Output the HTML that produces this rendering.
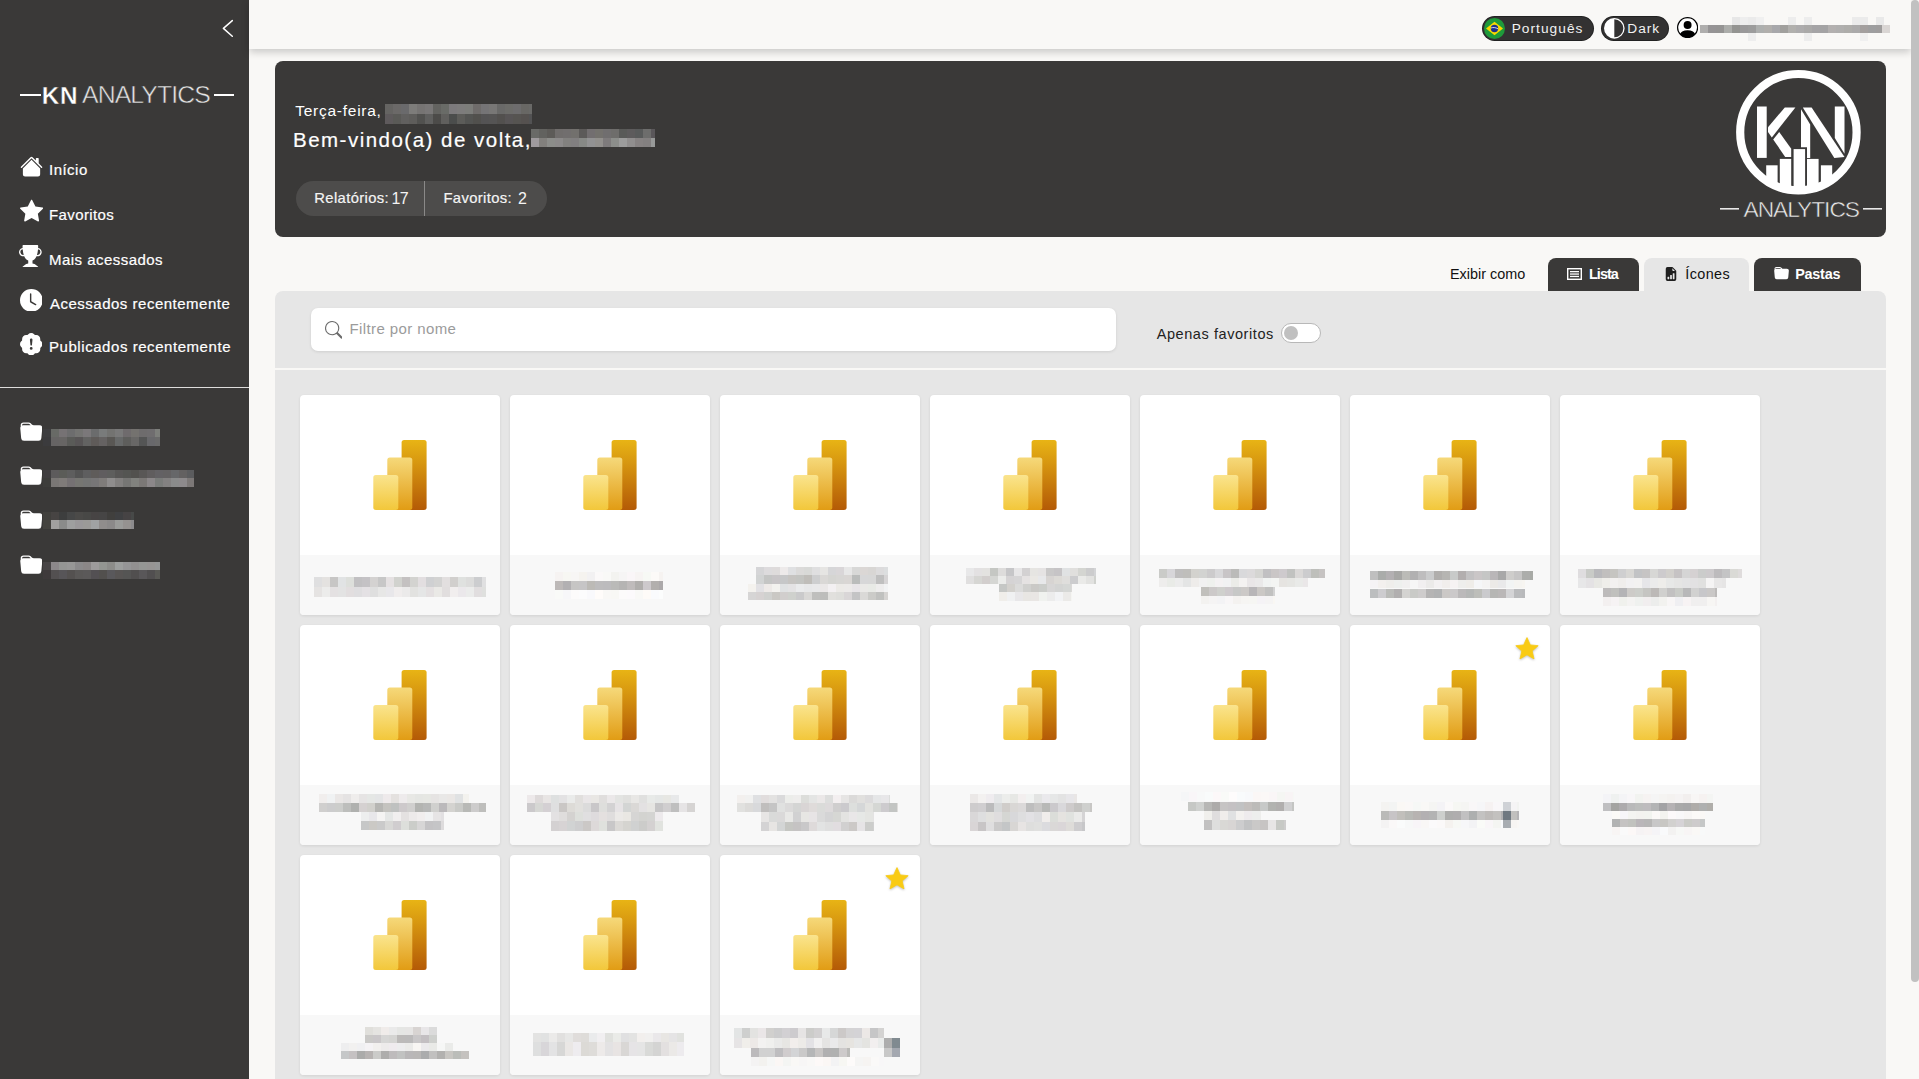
<!DOCTYPE html>
<html><head><meta charset="utf-8">
<style>
html,body{margin:0;padding:0}
body{width:1919px;height:1079px;overflow:hidden;position:relative;background:#f9f8f6;font-family:"Liberation Sans",sans-serif;}
i{position:absolute;display:block}
.abs{position:absolute}
#side{position:absolute;left:0;top:0;width:249px;height:1079px;background:#3a3938}
#top{position:absolute;left:249px;top:0;width:1662px;height:49px;background:#f9f8f6;box-shadow:0 3px 8px rgba(0,0,0,.2)}
#sb{position:absolute;left:1911px;top:0;width:8px;height:982px;background:#c1c1c1;border-radius:4px}
.t{position:absolute;white-space:nowrap;line-height:1}
.nav{color:#fff;font-size:14.5px}
#hero{position:absolute;left:275px;top:61px;width:1611px;height:176px;background:#3a3938;border-radius:8px}
#pill{position:absolute;left:296px;top:181px;width:251px;height:35px;background:#4d4c4b;border-radius:18px}
#panel{position:absolute;left:275px;top:291px;width:1611px;height:800px;background:#e6e6e6;border-radius:8px 8px 0 0}
#divl{position:absolute;left:275px;top:368px;width:1611px;height:2px;background:#f9f8f6}
.tab{position:absolute;top:258px;height:33px;border-radius:8px 8px 0 0;background:#3a3938}
#search{position:absolute;left:311px;top:308px;width:805px;height:43px;background:#fff;border-radius:7px;box-shadow:0 1px 3px rgba(0,0,0,.10)}
.card{position:absolute;width:200px;height:220px;background:#fff;border-radius:4px;overflow:hidden;box-shadow:0 1px 3px rgba(0,0,0,.09)}
.card .foot{position:absolute;left:0;top:160px;width:200px;height:60px;background:#f8f8f8}
.pbi{position:absolute}
.fstar{position:absolute}
.pillbtn{position:absolute;top:17px;height:23px;background:#333232;border-radius:13px;box-shadow:0 0 0 1px #222}
</style></head><body>
<svg width="0" height="0" style="position:absolute">
<defs>
<linearGradient id="g1" x1="0" y1="0" x2="0" y2="1"><stop offset="0" stop-color="#e8b415"/><stop offset="1" stop-color="#b45a06"/></linearGradient>
<linearGradient id="g2" x1="0" y1="0" x2="0" y2="1"><stop offset="0" stop-color="#f6d97a"/><stop offset="1" stop-color="#e19c14"/></linearGradient>
<linearGradient id="g3" x1="0" y1="0" x2="0" y2="1"><stop offset="0" stop-color="#fae48e"/><stop offset="1" stop-color="#f2c73a"/></linearGradient>
<symbol id="pbi" viewBox="0 0 54 70">
<rect x="28.6" y="0" width="25" height="70" rx="2.5" fill="url(#g1)"/>
<rect x="14.3" y="17.5" width="25" height="52.5" rx="2.5" fill="url(#g2)"/>
<rect x="0.3" y="35" width="25" height="35" rx="2.5" fill="url(#g3)"/>
</symbol>
</defs>
</svg>

<div id="side">
  <!-- chevron -->
  <svg class="abs" style="left:215px;top:14px" width="25" height="28" viewBox="215 14 25 28"><path d="M232.3 20.6L223.4 28.4l8.9 7.9" fill="none" stroke="#fff" stroke-width="1.5" stroke-linecap="round" stroke-linejoin="round"/></svg>
  <!-- logo -->
  <i style="left:20px;top:94px;width:21px;height:2px;background:#fff"></i>
  <div class="t" style="left:41.8px;top:83.60px;font-size:24.3px;color:#fff;letter-spacing:0.7px;font-weight:bold;-webkit-text-stroke:0.4px #3a3938">KN</div>
  <div class="t" style="left:82.0px;top:83.30px;font-size:24.8px;color:#e4e4e4;letter-spacing:-0.9px;-webkit-text-stroke:0.5px #3a3938">ANALYTICS</div>
  <i style="left:214px;top:94px;width:20px;height:2px;background:#fff"></i>

  <!-- nav icons -->
  <svg class="abs" style="left:19.7px;top:155.3px" width="23.04" height="23.04" viewBox="0 0 16 16" fill="#fff"><path d="M8.707 1.5a1 1 0 0 0-1.414 0L.646 8.146a.5.5 0 0 0 .708.708L8 2.207l6.646 6.647a.5.5 0 0 0 .708-.708L13 5.793V2.5a.5.5 0 0 0-.5-.5h-1a.5.5 0 0 0-.5.5v1.293z"/><path d="m8 3.293 6 6V13.5a1.5 1.5 0 0 1-1.5 1.5h-9A1.5 1.5 0 0 1 2 13.5V9.293z"/></svg>
  <div class="t" style="left:49.0px;top:162.40px;font-size:15px;color:#fff;letter-spacing:0.48px;-webkit-text-stroke:0.2px currentColor">Início</div>
  <svg class="abs" style="left:19.56px;top:199.3px" width="23.20" height="23.20" viewBox="0 0 16 16" fill="#fff"><path d="M3.612 15.443c-.386.198-.824-.149-.746-.592l.83-4.73L.173 6.765c-.329-.314-.158-.888.283-.95l4.898-.696L7.538.792c.197-.39.73-.39.927 0l2.184 4.327 4.898.696c.441.062.612.636.282.95l-3.522 3.356.83 4.73c.078.443-.36.79-.746.592L8 13.187l-4.389 2.256z"/></svg>
  <div class="t" style="left:49.0px;top:207.30px;font-size:15px;color:#fff;letter-spacing:0.387px;-webkit-text-stroke:0.2px currentColor">Favoritos</div>
  <svg class="abs" style="left:19.3px;top:244.7px" width="22.72" height="22.72" viewBox="0 0 16 16" fill="#fff"><path d="M2.5.5A.5.5 0 0 1 3 0h10a.5.5 0 0 1 .5.5q0 .807-.034 1.536a3 3 0 1 1-1.133 5.89c-.79 1.865-1.878 2.777-2.833 3.011v2.173l1.425.356c.194.048.377.135.537.255L13.3 15.1a.5.5 0 0 1-.3.9H3a.5.5 0 0 1-.3-.9l1.838-1.379c.16-.12.343-.207.537-.255L6.5 13.11v-2.173c-.955-.234-2.043-1.146-2.833-3.012a3 3 0 1 1-1.132-5.89A33 33 0 0 1 2.5.5m.099 2.54a2 2 0 0 0 .72 3.935c-.333-1.05-.588-2.346-.72-3.935m10.083 3.935a2 2 0 0 0 .72-3.935c-.133 1.59-.388 2.885-.72 3.935"/></svg>
  <div class="t" style="left:49.0px;top:251.80px;font-size:15px;color:#fff;letter-spacing:0.462px;-webkit-text-stroke:0.2px currentColor">Mais acessados</div>
  <svg class="abs" style="left:19.6px;top:288.7px" width="22.72" height="22.72" viewBox="0 0 16 16" fill="#fff"><path d="M16 8A8 8 0 1 1 0 8a8 8 0 0 1 16 0M8 3.5a.5.5 0 0 0-1 0V9a.5.5 0 0 0 .252.434l3.5 2a.5.5 0 0 0 .496-.868L8 8.71z"/></svg>
  <div class="t" style="left:50.0px;top:295.60px;font-size:15px;color:#fff;letter-spacing:0.5px;-webkit-text-stroke:0.2px currentColor">Acessados recentemente</div>
  <svg class="abs" style="left:19.6px;top:332.8px" width="22.40" height="22.40" viewBox="0 0 16 16" fill="#fff"><path d="M10.067.87a2.89 2.89 0 0 0-4.134 0l-.622.638-.89-.011a2.89 2.89 0 0 0-2.924 2.924l.01.89-.636.622a2.89 2.89 0 0 0 0 4.134l.637.622-.011.89a2.89 2.89 0 0 0 2.924 2.924l.89-.01.622.636a2.89 2.89 0 0 0 4.134 0l.622-.637.89.011a2.89 2.89 0 0 0 2.924-2.924l-.01-.89.636-.622a2.89 2.89 0 0 0 0-4.134l-.637-.622.011-.89a2.89 2.89 0 0 0-2.924-2.924l-.89.01zM8 4c.535 0 .954.462.9.995l-.35 3.507a.552.552 0 0 1-1.1 0L7.1 4.995A.905.905 0 0 1 8 4m.002 6a1 1 0 1 1 0 2 1 1 0 0 1 0-2"/></svg>
  <div class="t" style="left:49.0px;top:339.40px;font-size:15px;color:#fff;letter-spacing:0.555px;-webkit-text-stroke:0.2px currentColor">Publicados recentemente</div>

  <i style="left:0;top:387px;width:249px;height:1px;background:#dedddc"></i>

  <!-- folders -->
  <svg class="abs" style="left:19.73px;top:420.6px" width="22.53" height="22.53" viewBox="0 0 16 16" fill="#fff"><path d="M9.828 3h3.982a2 2 0 0 1 1.992 2.181l-.637 7A2 2 0 0 1 13.174 14H2.825a2 2 0 0 1-1.991-1.819l-.637-7a2 2 0 0 1 .342-1.31L.5 3a2 2 0 0 1 2-2h3.672a2 2 0 0 1 1.414.586l.828.828A2 2 0 0 0 9.828 3m-8.322.12q.322-.119.684-.12h5.396l-.707-.707A1 1 0 0 0 6.172 2H2.5a1 1 0 0 0-1 .981z"/></svg>
  <svg class="abs" style="left:19.73px;top:465.0px" width="22.53" height="22.53" viewBox="0 0 16 16" fill="#fff"><path d="M9.828 3h3.982a2 2 0 0 1 1.992 2.181l-.637 7A2 2 0 0 1 13.174 14H2.825a2 2 0 0 1-1.991-1.819l-.637-7a2 2 0 0 1 .342-1.31L.5 3a2 2 0 0 1 2-2h3.672a2 2 0 0 1 1.414.586l.828.828A2 2 0 0 0 9.828 3m-8.322.12q.322-.119.684-.12h5.396l-.707-.707A1 1 0 0 0 6.172 2H2.5a1 1 0 0 0-1 .981z"/></svg>
  <svg class="abs" style="left:19.73px;top:509.3px" width="22.53" height="22.53" viewBox="0 0 16 16" fill="#fff"><path d="M9.828 3h3.982a2 2 0 0 1 1.992 2.181l-.637 7A2 2 0 0 1 13.174 14H2.825a2 2 0 0 1-1.991-1.819l-.637-7a2 2 0 0 1 .342-1.31L.5 3a2 2 0 0 1 2-2h3.672a2 2 0 0 1 1.414.586l.828.828A2 2 0 0 0 9.828 3m-8.322.12q.322-.119.684-.12h5.396l-.707-.707A1 1 0 0 0 6.172 2H2.5a1 1 0 0 0-1 .981z"/></svg>
  <svg class="abs" style="left:19.73px;top:553.6px" width="22.53" height="22.53" viewBox="0 0 16 16" fill="#fff"><path d="M9.828 3h3.982a2 2 0 0 1 1.992 2.181l-.637 7A2 2 0 0 1 13.174 14H2.825a2 2 0 0 1-1.991-1.819l-.637-7a2 2 0 0 1 .342-1.31L.5 3a2 2 0 0 1 2-2h3.672a2 2 0 0 1 1.414.586l.828.828A2 2 0 0 0 9.828 3m-8.322.12q.322-.119.684-.12h5.396l-.707-.707A1 1 0 0 0 6.172 2H2.5a1 1 0 0 0-1 .981z"/></svg>
</div>
<i style="left:43px;top:429px;width:8px;height:8px;background:#3d3d3f"></i><i style="left:51px;top:429px;width:8px;height:8px;background:#686a66"></i><i style="left:59px;top:429px;width:8px;height:8px;background:#767274"></i><i style="left:67px;top:429px;width:8px;height:8px;background:#6d6d6e"></i><i style="left:75px;top:429px;width:8px;height:8px;background:#747472"></i><i style="left:83px;top:429px;width:8px;height:8px;background:#7b787a"></i><i style="left:91px;top:429px;width:8px;height:8px;background:#6b6c6d"></i><i style="left:99px;top:429px;width:8px;height:8px;background:#797b7b"></i><i style="left:107px;top:429px;width:8px;height:8px;background:#737371"></i><i style="left:115px;top:429px;width:8px;height:8px;background:#797979"></i><i style="left:123px;top:429px;width:8px;height:8px;background:#6f6b6d"></i><i style="left:131px;top:429px;width:8px;height:8px;background:#74726f"></i><i style="left:139px;top:429px;width:8px;height:8px;background:#6e6c6d"></i><i style="left:147px;top:429px;width:8px;height:8px;background:#6f6d6f"></i><i style="left:155px;top:429px;width:5px;height:8px;background:#7d7f7b"></i><i style="left:43px;top:437px;width:8px;height:9px;background:#3b3b3d"></i><i style="left:51px;top:437px;width:8px;height:9px;background:#666464"></i><i style="left:59px;top:437px;width:8px;height:9px;background:#676564"></i><i style="left:67px;top:437px;width:8px;height:9px;background:#5a5b58"></i><i style="left:75px;top:437px;width:8px;height:9px;background:#585556"></i><i style="left:83px;top:437px;width:8px;height:9px;background:#636362"></i><i style="left:91px;top:437px;width:8px;height:9px;background:#5f5b59"></i><i style="left:99px;top:437px;width:8px;height:9px;background:#656262"></i><i style="left:107px;top:437px;width:8px;height:9px;background:#595754"></i><i style="left:115px;top:437px;width:8px;height:9px;background:#676969"></i><i style="left:123px;top:437px;width:8px;height:9px;background:#5e5e5c"></i><i style="left:131px;top:437px;width:8px;height:9px;background:#686766"></i><i style="left:139px;top:437px;width:8px;height:9px;background:#545555"></i><i style="left:147px;top:437px;width:8px;height:9px;background:#68686b"></i><i style="left:155px;top:437px;width:5px;height:9px;background:#6a6a6a"></i><i style="left:43px;top:470px;width:8px;height:8px;background:#403e40"></i><i style="left:51px;top:470px;width:8px;height:8px;background:#5d5b5c"></i><i style="left:59px;top:470px;width:8px;height:8px;background:#5b5c58"></i><i style="left:67px;top:470px;width:8px;height:8px;background:#5e5e5e"></i><i style="left:75px;top:470px;width:8px;height:8px;background:#545454"></i><i style="left:83px;top:470px;width:8px;height:8px;background:#5e5e5f"></i><i style="left:91px;top:470px;width:8px;height:8px;background:#5f5c5a"></i><i style="left:99px;top:470px;width:8px;height:8px;background:#605d5f"></i><i style="left:107px;top:470px;width:8px;height:8px;background:#5e5e5d"></i><i style="left:115px;top:470px;width:8px;height:8px;background:#575655"></i><i style="left:123px;top:470px;width:8px;height:8px;background:#545552"></i><i style="left:131px;top:470px;width:8px;height:8px;background:#52514e"></i><i style="left:139px;top:470px;width:8px;height:8px;background:#595756"></i><i style="left:147px;top:470px;width:8px;height:8px;background:#605d5e"></i><i style="left:155px;top:470px;width:8px;height:8px;background:#636164"></i><i style="left:163px;top:470px;width:8px;height:8px;background:#636162"></i><i style="left:171px;top:470px;width:8px;height:8px;background:#666769"></i><i style="left:179px;top:470px;width:8px;height:8px;background:#636161"></i><i style="left:187px;top:470px;width:7px;height:8px;background:#5b5c5e"></i><i style="left:43px;top:478px;width:8px;height:9px;background:#3d3d3b"></i><i style="left:51px;top:478px;width:8px;height:9px;background:#7a7775"></i><i style="left:59px;top:478px;width:8px;height:9px;background:#7f7b79"></i><i style="left:67px;top:478px;width:8px;height:9px;background:#757173"></i><i style="left:75px;top:478px;width:8px;height:9px;background:#767672"></i><i style="left:83px;top:478px;width:8px;height:9px;background:#747574"></i><i style="left:91px;top:478px;width:8px;height:9px;background:#777677"></i><i style="left:99px;top:478px;width:8px;height:9px;background:#7f7c7a"></i><i style="left:107px;top:478px;width:8px;height:9px;background:#8f8d8d"></i><i style="left:115px;top:478px;width:8px;height:9px;background:#82807f"></i><i style="left:123px;top:478px;width:8px;height:9px;background:#767674"></i><i style="left:131px;top:478px;width:8px;height:9px;background:#81827e"></i><i style="left:139px;top:478px;width:8px;height:9px;background:#7b7876"></i><i style="left:147px;top:478px;width:8px;height:9px;background:#8b8789"></i><i style="left:155px;top:478px;width:8px;height:9px;background:#7a7c7a"></i><i style="left:163px;top:478px;width:8px;height:9px;background:#838181"></i><i style="left:171px;top:478px;width:8px;height:9px;background:#8a8b8b"></i><i style="left:179px;top:478px;width:8px;height:9px;background:#8d8a8c"></i><i style="left:187px;top:478px;width:7px;height:9px;background:#7c7877"></i><i style="left:43px;top:512px;width:8px;height:8px;background:#41403d"></i><i style="left:51px;top:512px;width:8px;height:8px;background:#474443"></i><i style="left:59px;top:512px;width:8px;height:8px;background:#3d3e3e"></i><i style="left:67px;top:512px;width:8px;height:8px;background:#464747"></i><i style="left:75px;top:512px;width:8px;height:8px;background:#4b4a48"></i><i style="left:83px;top:512px;width:8px;height:8px;background:#484846"></i><i style="left:91px;top:512px;width:8px;height:8px;background:#474444"></i><i style="left:99px;top:512px;width:8px;height:8px;background:#464545"></i><i style="left:107px;top:512px;width:8px;height:8px;background:#403f3d"></i><i style="left:115px;top:512px;width:8px;height:8px;background:#3f4042"></i><i style="left:123px;top:512px;width:8px;height:8px;background:#464344"></i><i style="left:131px;top:512px;width:3px;height:8px;background:#474948"></i><i style="left:43px;top:520px;width:8px;height:9px;background:#44433f"></i><i style="left:51px;top:520px;width:8px;height:9px;background:#a1a09f"></i><i style="left:59px;top:520px;width:8px;height:9px;background:#8a8b8a"></i><i style="left:67px;top:520px;width:8px;height:9px;background:#9e9f9f"></i><i style="left:75px;top:520px;width:8px;height:9px;background:#9a989a"></i><i style="left:83px;top:520px;width:8px;height:9px;background:#9b9a98"></i><i style="left:91px;top:520px;width:8px;height:9px;background:#a0a2a3"></i><i style="left:99px;top:520px;width:8px;height:9px;background:#908d8c"></i><i style="left:107px;top:520px;width:8px;height:9px;background:#8b8989"></i><i style="left:115px;top:520px;width:8px;height:9px;background:#9a9b99"></i><i style="left:123px;top:520px;width:8px;height:9px;background:#959290"></i><i style="left:131px;top:520px;width:3px;height:9px;background:#8c8b8d"></i><i style="left:43px;top:562px;width:8px;height:8px;background:#484546"></i><i style="left:51px;top:562px;width:8px;height:8px;background:#8c888a"></i><i style="left:59px;top:562px;width:8px;height:8px;background:#949593"></i><i style="left:67px;top:562px;width:8px;height:8px;background:#979796"></i><i style="left:75px;top:562px;width:8px;height:8px;background:#8b8a8b"></i><i style="left:83px;top:562px;width:8px;height:8px;background:#8b8787"></i><i style="left:91px;top:562px;width:8px;height:8px;background:#9d9b9b"></i><i style="left:99px;top:562px;width:8px;height:8px;background:#939591"></i><i style="left:107px;top:562px;width:8px;height:8px;background:#8c8c89"></i><i style="left:115px;top:562px;width:8px;height:8px;background:#9c9e9d"></i><i style="left:123px;top:562px;width:8px;height:8px;background:#959596"></i><i style="left:131px;top:562px;width:8px;height:8px;background:#929090"></i><i style="left:139px;top:562px;width:8px;height:8px;background:#959694"></i><i style="left:147px;top:562px;width:8px;height:8px;background:#969493"></i><i style="left:155px;top:562px;width:5px;height:8px;background:#959696"></i><i style="left:43px;top:570px;width:8px;height:9px;background:#3e3a3b"></i><i style="left:51px;top:570px;width:8px;height:9px;background:#535051"></i><i style="left:59px;top:570px;width:8px;height:9px;background:#575558"></i><i style="left:67px;top:570px;width:8px;height:9px;background:#545150"></i><i style="left:75px;top:570px;width:8px;height:9px;background:#5a5857"></i><i style="left:83px;top:570px;width:8px;height:9px;background:#5b5959"></i><i style="left:91px;top:570px;width:8px;height:9px;background:#535053"></i><i style="left:99px;top:570px;width:8px;height:9px;background:#52504e"></i><i style="left:107px;top:570px;width:8px;height:9px;background:#59585b"></i><i style="left:115px;top:570px;width:8px;height:9px;background:#585554"></i><i style="left:123px;top:570px;width:8px;height:9px;background:#555554"></i><i style="left:131px;top:570px;width:8px;height:9px;background:#514f4f"></i><i style="left:139px;top:570px;width:8px;height:9px;background:#595759"></i><i style="left:147px;top:570px;width:8px;height:9px;background:#514f50"></i><i style="left:155px;top:570px;width:5px;height:9px;background:#595955"></i>

<div id="top"></div>
<!-- language pill -->
<div class="pillbtn" style="left:1483px;width:110px"></div>
<svg class="abs" style="left:1484px;top:18px" width="21" height="21" viewBox="0 0 21 21"><circle cx="10.5" cy="10.5" r="10.5" fill="#1e9a3a"/><path d="M10.5 3.8L19 10.5l-8.5 6.7L2 10.5z" fill="#f8d800"/><circle cx="10.5" cy="10.5" r="3.7" fill="#1d2f8a"/><path d="M7 10c2-.8 4.6-.6 7 .8" stroke="#fff" stroke-width=".8" fill="none"/></svg>
<div class="t" style="left:1511.7px;top:21.50px;font-size:13.7px;color:#f2f2f2;letter-spacing:1.037px">Português</div>
<div class="pillbtn" style="left:1602px;width:66px"></div>
<svg class="abs" style="left:1604.0px;top:18.3px" width="20.64" height="20.64" viewBox="0 0 16 16" fill="#fff"><path d="M8 15A7 7 0 1 0 8 1zm0 1A8 8 0 1 1 8 0a8 8 0 0 1 0 16"/></svg>
<div class="t" style="left:1627.3px;top:21.60px;font-size:13.7px;color:#f2f2f2;letter-spacing:0.967px">Dark</div>
<div class="abs" style="left:1677px;top:17px;width:21px;height:21px;border-radius:50%;background:#fff"></div><svg class="abs" style="left:1676.8px;top:16.9px" width="21.20" height="21.20" viewBox="0 0 16 16" fill="#000"><path d="M11 6a3 3 0 1 1-6 0 3 3 0 0 1 6 0"/><path d="M0 8a8 8 0 1 1 16 0A8 8 0 0 1 0 8m8-7a7 7 0 0 0-5.468 11.37C3.242 11.226 4.805 10 8 10s4.757 1.225 5.468 2.37A7 7 0 0 0 8 1"/></svg>
<i style="left:1732px;top:17px;width:8px;height:8px;background:#e7e7e7"></i><i style="left:1740px;top:17px;width:8px;height:8px;background:#eeeeee"></i><i style="left:1748px;top:17px;width:8px;height:8px;background:#ebebeb"></i><i style="left:1756px;top:17px;width:8px;height:8px;background:#f0f0f0"></i><i style="left:1788px;top:17px;width:8px;height:8px;background:#ededed"></i><i style="left:1804px;top:17px;width:8px;height:8px;background:#ededed"></i><i style="left:1852px;top:17px;width:8px;height:8px;background:#ebebeb"></i><i style="left:1860px;top:17px;width:8px;height:8px;background:#ebebeb"></i><i style="left:1876px;top:17px;width:8px;height:8px;background:#e9e9e9"></i><i style="left:1700px;top:25px;width:8px;height:8px;background:#afaead"></i><i style="left:1708px;top:25px;width:8px;height:8px;background:#969495"></i><i style="left:1716px;top:25px;width:8px;height:8px;background:#959493"></i><i style="left:1724px;top:25px;width:8px;height:8px;background:#acadaa"></i><i style="left:1732px;top:25px;width:8px;height:8px;background:#949491"></i><i style="left:1740px;top:25px;width:8px;height:8px;background:#9a999a"></i><i style="left:1748px;top:25px;width:8px;height:8px;background:#9c9c9c"></i><i style="left:1756px;top:25px;width:8px;height:8px;background:#adafae"></i><i style="left:1764px;top:25px;width:8px;height:8px;background:#b1afac"></i><i style="left:1772px;top:25px;width:8px;height:8px;background:#a8a8ab"></i><i style="left:1780px;top:25px;width:8px;height:8px;background:#a1a09d"></i><i style="left:1788px;top:25px;width:8px;height:8px;background:#b1b0ad"></i><i style="left:1796px;top:25px;width:8px;height:8px;background:#adacad"></i><i style="left:1804px;top:25px;width:8px;height:8px;background:#aaa9a8"></i><i style="left:1812px;top:25px;width:8px;height:8px;background:#a5a4a6"></i><i style="left:1820px;top:25px;width:8px;height:8px;background:#a4a3a4"></i><i style="left:1828px;top:25px;width:8px;height:8px;background:#b3b0af"></i><i style="left:1836px;top:25px;width:8px;height:8px;background:#b0afae"></i><i style="left:1844px;top:25px;width:8px;height:8px;background:#aeadaa"></i><i style="left:1852px;top:25px;width:8px;height:8px;background:#abaaaa"></i><i style="left:1860px;top:25px;width:8px;height:8px;background:#a39f9e"></i><i style="left:1868px;top:25px;width:8px;height:8px;background:#9e9e9f"></i><i style="left:1876px;top:25px;width:6px;height:8px;background:#9f9d9d"></i><i style="left:1882px;top:25px;width:8px;height:8px;background:#dad6d4"></i><i style="left:1748px;top:33px;width:8px;height:8px;background:#eeeeee"></i><i style="left:1804px;top:33px;width:8px;height:8px;background:#ededed"></i><i style="left:1860px;top:33px;width:8px;height:8px;background:#f0f0f0"></i>
<div id="sb"></div>

<!-- hero -->
<div id="hero"></div>
<div class="t" style="left:295.2px;top:103.40px;font-size:15.5px;color:#fff;letter-spacing:0.745px">Terça-feira,</div>
<div class="t" style="left:293.0px;top:129.50px;font-size:20.5px;color:#fff;letter-spacing:1.486px;-webkit-text-stroke:0.2px currentColor">Bem-vindo(a) de volta,</div>
<i style="left:385px;top:104px;width:8px;height:10px;background:#656462"></i><i style="left:393px;top:104px;width:8px;height:10px;background:#6b6968"></i><i style="left:401px;top:104px;width:8px;height:10px;background:#6a6a6c"></i><i style="left:409px;top:104px;width:8px;height:10px;background:#7d7c7a"></i><i style="left:417px;top:104px;width:8px;height:10px;background:#767473"></i><i style="left:425px;top:104px;width:8px;height:10px;background:#797777"></i><i style="left:433px;top:104px;width:8px;height:10px;background:#636360"></i><i style="left:441px;top:104px;width:8px;height:10px;background:#696b67"></i><i style="left:449px;top:104px;width:8px;height:10px;background:#7c7a7c"></i><i style="left:457px;top:104px;width:8px;height:10px;background:#7d7c7c"></i><i style="left:465px;top:104px;width:8px;height:10px;background:#7c7d7a"></i><i style="left:473px;top:104px;width:8px;height:10px;background:#6f6c6b"></i><i style="left:481px;top:104px;width:8px;height:10px;background:#757476"></i><i style="left:489px;top:104px;width:8px;height:10px;background:#787776"></i><i style="left:497px;top:104px;width:8px;height:10px;background:#696968"></i><i style="left:505px;top:104px;width:8px;height:10px;background:#6c6c69"></i><i style="left:513px;top:104px;width:8px;height:10px;background:#6d6c6d"></i><i style="left:521px;top:104px;width:8px;height:10px;background:#686764"></i><i style="left:529px;top:104px;width:3px;height:10px;background:#696967"></i><i style="left:385px;top:114px;width:8px;height:10px;background:#5e5a5c"></i><i style="left:393px;top:114px;width:8px;height:10px;background:#5a5a57"></i><i style="left:401px;top:114px;width:8px;height:10px;background:#61605f"></i><i style="left:409px;top:114px;width:8px;height:10px;background:#5e5d5b"></i><i style="left:417px;top:114px;width:8px;height:10px;background:#51514f"></i><i style="left:425px;top:114px;width:8px;height:10px;background:#5f5f5e"></i><i style="left:433px;top:114px;width:8px;height:10px;background:#4c4b49"></i><i style="left:441px;top:114px;width:8px;height:10px;background:#605f5d"></i><i style="left:449px;top:114px;width:8px;height:10px;background:#4b4d4c"></i><i style="left:457px;top:114px;width:8px;height:10px;background:#5c5c59"></i><i style="left:465px;top:114px;width:8px;height:10px;background:#535452"></i><i style="left:473px;top:114px;width:8px;height:10px;background:#51504d"></i><i style="left:481px;top:114px;width:8px;height:10px;background:#545354"></i><i style="left:489px;top:114px;width:8px;height:10px;background:#555454"></i><i style="left:497px;top:114px;width:8px;height:10px;background:#52504e"></i><i style="left:505px;top:114px;width:8px;height:10px;background:#575455"></i><i style="left:513px;top:114px;width:8px;height:10px;background:#565451"></i><i style="left:521px;top:114px;width:8px;height:10px;background:#55514f"></i><i style="left:529px;top:114px;width:3px;height:10px;background:#525253"></i><i style="left:531px;top:129px;width:8px;height:9px;background:#696a67"></i><i style="left:539px;top:129px;width:8px;height:9px;background:#62625f"></i><i style="left:547px;top:129px;width:8px;height:9px;background:#5d5b58"></i><i style="left:555px;top:129px;width:8px;height:9px;background:#706d6c"></i><i style="left:563px;top:129px;width:8px;height:9px;background:#716e6e"></i><i style="left:571px;top:129px;width:8px;height:9px;background:#72706d"></i><i style="left:579px;top:129px;width:8px;height:9px;background:#5c5a59"></i><i style="left:587px;top:129px;width:8px;height:9px;background:#726e70"></i><i style="left:595px;top:129px;width:8px;height:9px;background:#73716d"></i><i style="left:603px;top:129px;width:8px;height:9px;background:#706e6f"></i><i style="left:611px;top:129px;width:8px;height:9px;background:#6e6d6b"></i><i style="left:619px;top:129px;width:8px;height:9px;background:#595a58"></i><i style="left:627px;top:129px;width:8px;height:9px;background:#5d5b5c"></i><i style="left:635px;top:129px;width:8px;height:9px;background:#585a5a"></i><i style="left:643px;top:129px;width:8px;height:9px;background:#6d6d6c"></i><i style="left:651px;top:129px;width:4px;height:9px;background:#5a575a"></i><i style="left:531px;top:138px;width:8px;height:9px;background:#9f9b9e"></i><i style="left:539px;top:138px;width:8px;height:9px;background:#82807d"></i><i style="left:547px;top:138px;width:8px;height:9px;background:#8c8d8a"></i><i style="left:555px;top:138px;width:8px;height:9px;background:#8c8a8a"></i><i style="left:563px;top:138px;width:8px;height:9px;background:#82817f"></i><i style="left:571px;top:138px;width:8px;height:9px;background:#817f80"></i><i style="left:579px;top:138px;width:8px;height:9px;background:#878986"></i><i style="left:587px;top:138px;width:8px;height:9px;background:#929293"></i><i style="left:595px;top:138px;width:8px;height:9px;background:#92908d"></i><i style="left:603px;top:138px;width:8px;height:9px;background:#7e7b7c"></i><i style="left:611px;top:138px;width:8px;height:9px;background:#8c8e8b"></i><i style="left:619px;top:138px;width:8px;height:9px;background:#9c9c9c"></i><i style="left:627px;top:138px;width:8px;height:9px;background:#908e8e"></i><i style="left:635px;top:138px;width:8px;height:9px;background:#868282"></i><i style="left:643px;top:138px;width:8px;height:9px;background:#838080"></i><i style="left:651px;top:138px;width:4px;height:9px;background:#989a99"></i>
<div id="pill"></div>
<i style="left:424px;top:181px;width:1px;height:35px;background:#8a8988"></i>
<div class="t" style="left:314.3px;top:191.30px;font-size:14.8px;color:#f4f4f4;letter-spacing:0.37px;-webkit-text-stroke:0.2px currentColor">Relatórios:</div>
<div class="t" style="left:391.5px;top:191.20px;font-size:16px;color:#f4f4f4;letter-spacing:-0.6px">17</div>
<div class="t" style="left:443.4px;top:191.30px;font-size:14.8px;color:#f4f4f4;letter-spacing:0.367px;-webkit-text-stroke:0.2px currentColor">Favoritos:</div>
<div class="t" style="left:518.0px;top:191.20px;font-size:16px;color:#f4f4f4;letter-spacing:0.0px">2</div>

<!-- hero logo -->
<svg class="abs" style="left:1715px;top:65px" width="170" height="160" viewBox="1715 65 170 160">
  <defs><clipPath id="cc"><circle cx="1798.4" cy="132.2" r="58"/></clipPath></defs>
  <circle cx="1798.4" cy="132.2" r="58.2" fill="none" stroke="#fff" stroke-width="8.2"/>
  <rect x="1757" y="106.5" width="9.7" height="51.4" fill="#fff"/>
  <path d="M1784.8 107.4h10.6l-23.6 30.1-3.8-5.5v-4.7z" fill="#fff"/>
  <path d="M1779.2 132l12 16.7v8.3h-6l-12-17.6z" fill="#fff"/>
  <path d="M1801 109.3l9.2 15.3v33.3h-3.2v-10.6h-6z" fill="#fff"/>
  <path d="M1802.8 107.4h8.8l32.9 49.6-10.2.9z" fill="#fff"/>
  <path d="M1834.8 106.5h9.7v47.3l-9.7-15.8z" fill="#fff"/>
  <g clip-path="url(#cc)" fill="#fff">
  <rect x="1766.2" y="165.3" width="11.4" height="40"/>
  <rect x="1779.8" y="158.9" width="11.4" height="40"/>
  <rect x="1793.6" y="149.1" width="11.5" height="50"/>
  <rect x="1807" y="158.9" width="11.6" height="40"/>
  <rect x="1820.9" y="165.3" width="11.3" height="40"/>
  </g>
  <rect x="1720" y="208" width="19" height="1.6" fill="#e8e8e8"/>
  <rect x="1863" y="208" width="19" height="1.6" fill="#e8e8e8"/>
</svg>
<div class="t" style="left:1743.5px;top:198.00px;font-size:22.8px;color:#ececec;letter-spacing:-1.062px;-webkit-text-stroke:0.5px #3a3938">ANALYTICS</div>

<!-- tabs -->
<div class="t" style="left:1450.0px;top:266.85px;font-size:14.4px;color:#111;letter-spacing:0.0px">Exibir como</div>
<div class="tab" style="left:1548px;width:91px"></div>
<div class="tab" style="left:1644px;width:105px;background:#e6e6e6"></div>
<div class="tab" style="left:1754px;width:107px"></div>
<svg class="abs" style="left:1567px;top:268px" width="15" height="12" viewBox="0 0 15 12"><rect x=".7" y=".7" width="13.6" height="10.6" fill="none" stroke="#fff" stroke-width="1.4"/><rect x="3" y="3" width="9" height="1.3" fill="#fff"/><rect x="3" y="5.4" width="9" height="1.3" fill="#fff"/><rect x="3" y="7.8" width="9" height="1.3" fill="#fff"/></svg>
<div class="t" style="left:1589.0px;top:267.35px;font-size:14.4px;color:#fff;letter-spacing:-0.938px;font-weight:bold">Lista</div>
<svg class="abs" style="left:1664.25px;top:266.8px" width="14.00" height="14.00" viewBox="0 0 16 16" fill="#1f1f1f"><path d="M9.293 0H4a2 2 0 0 0-2 2v12a2 2 0 0 0 2 2h8a2 2 0 0 0 2-2V4.707A1 1 0 0 0 13.707 4L10 .293A1 1 0 0 0 9.293 0M9.5 3.5v-2l3 3h-2a1 1 0 0 1-1-1m.5 10v-6a.5.5 0 0 1 .5-.5h1a.5.5 0 0 1 .5.5v6a.5.5 0 0 1-.5.5h-1a.5.5 0 0 1-.5-.5m-2.5.5a.5.5 0 0 1-.5-.5v-4a.5.5 0 0 1 .5-.5h1a.5.5 0 0 1 .5.5v4a.5.5 0 0 1-.5.5zm-3 0a.5.5 0 0 1-.5-.5v-2a.5.5 0 0 1 .5-.5h1a.5.5 0 0 1 .5.5v2a.5.5 0 0 1-.5.5z"/></svg>
<div class="t" style="left:1685.25px;top:267.35px;font-size:14.4px;color:#111;letter-spacing:0.4px">Ícones</div>
<svg class="abs" style="left:1774.0px;top:266.46px" width="15.04" height="15.04" viewBox="0 0 16 16" fill="#fff"><path d="M9.828 3h3.982a2 2 0 0 1 1.992 2.181l-.637 7A2 2 0 0 1 13.174 14H2.825a2 2 0 0 1-1.991-1.819l-.637-7a2 2 0 0 1 .342-1.31L.5 3a2 2 0 0 1 2-2h3.672a2 2 0 0 1 1.414.586l.828.828A2 2 0 0 0 9.828 3m-8.322.12q.322-.119.684-.12h5.396l-.707-.707A1 1 0 0 0 6.172 2H2.5a1 1 0 0 0-1 .981z"/></svg>
<div class="t" style="left:1795.25px;top:267.35px;font-size:14.4px;color:#fff;letter-spacing:-0.25px;font-weight:bold">Pastas</div>

<!-- panel -->
<div id="panel"></div>
<div id="divl"></div>
<div id="search"></div>
<svg class="abs" style="left:324.7px;top:321.0px" width="17.60" height="17.60" viewBox="0 0 16 16" fill="#6b6b6b"><path d="M11.742 10.344a6.5 6.5 0 1 0-1.397 1.398h-.001q.044.06.098.115l3.85 3.85a1 1 0 0 0 1.415-1.414l-3.85-3.85a1 1 0 0 0-.115-.1zM12 6.5a5.5 5.5 0 1 1-11 0 5.5 5.5 0 0 1 11 0"/></svg>
<div class="t" style="left:349.5px;top:320.60px;font-size:15px;color:#9b9b9b;letter-spacing:0.393px">Filtre por nome</div>
<div class="t" style="left:1156.7px;top:326.60px;font-size:14.5px;color:#222;letter-spacing:0.573px">Apenas favoritos</div>
<div class="abs" style="left:1281px;top:323px;width:38px;height:18px;border:1px solid #b8b8b8;border-radius:11px;background:#fff"></div>
<div class="abs" style="left:1284px;top:326px;width:14px;height:14px;border-radius:7px;background:#c0c0c0"></div>

<div class="card" style="left:300px;top:395px"><div class="foot"></div></div><svg class="pbi" style="left:373px;top:440px" width="54" height="70" viewBox="0 0 54 70"><use href="#pbi"/></svg><div class="card" style="left:510px;top:395px"><div class="foot"></div></div><svg class="pbi" style="left:583px;top:440px" width="54" height="70" viewBox="0 0 54 70"><use href="#pbi"/></svg><div class="card" style="left:720px;top:395px"><div class="foot"></div></div><svg class="pbi" style="left:793px;top:440px" width="54" height="70" viewBox="0 0 54 70"><use href="#pbi"/></svg><div class="card" style="left:930px;top:395px"><div class="foot"></div></div><svg class="pbi" style="left:1003px;top:440px" width="54" height="70" viewBox="0 0 54 70"><use href="#pbi"/></svg><div class="card" style="left:1140px;top:395px"><div class="foot"></div></div><svg class="pbi" style="left:1213px;top:440px" width="54" height="70" viewBox="0 0 54 70"><use href="#pbi"/></svg><div class="card" style="left:1350px;top:395px"><div class="foot"></div></div><svg class="pbi" style="left:1423px;top:440px" width="54" height="70" viewBox="0 0 54 70"><use href="#pbi"/></svg><div class="card" style="left:1560px;top:395px"><div class="foot"></div></div><svg class="pbi" style="left:1633px;top:440px" width="54" height="70" viewBox="0 0 54 70"><use href="#pbi"/></svg><div class="card" style="left:300px;top:625px"><div class="foot"></div></div><svg class="pbi" style="left:373px;top:670px" width="54" height="70" viewBox="0 0 54 70"><use href="#pbi"/></svg><div class="card" style="left:510px;top:625px"><div class="foot"></div></div><svg class="pbi" style="left:583px;top:670px" width="54" height="70" viewBox="0 0 54 70"><use href="#pbi"/></svg><div class="card" style="left:720px;top:625px"><div class="foot"></div></div><svg class="pbi" style="left:793px;top:670px" width="54" height="70" viewBox="0 0 54 70"><use href="#pbi"/></svg><div class="card" style="left:930px;top:625px"><div class="foot"></div></div><svg class="pbi" style="left:1003px;top:670px" width="54" height="70" viewBox="0 0 54 70"><use href="#pbi"/></svg><div class="card" style="left:1140px;top:625px"><div class="foot"></div></div><svg class="pbi" style="left:1213px;top:670px" width="54" height="70" viewBox="0 0 54 70"><use href="#pbi"/></svg><div class="card" style="left:1350px;top:625px"><div class="foot"></div></div><svg class="pbi" style="left:1423px;top:670px" width="54" height="70" viewBox="0 0 54 70"><use href="#pbi"/></svg><div class="card" style="left:1560px;top:625px"><div class="foot"></div></div><svg class="pbi" style="left:1633px;top:670px" width="54" height="70" viewBox="0 0 54 70"><use href="#pbi"/></svg><div class="card" style="left:300px;top:855px"><div class="foot"></div></div><svg class="pbi" style="left:373px;top:900px" width="54" height="70" viewBox="0 0 54 70"><use href="#pbi"/></svg><div class="card" style="left:510px;top:855px"><div class="foot"></div></div><svg class="pbi" style="left:583px;top:900px" width="54" height="70" viewBox="0 0 54 70"><use href="#pbi"/></svg><div class="card" style="left:720px;top:855px"><div class="foot"></div></div><svg class="pbi" style="left:793px;top:900px" width="54" height="70" viewBox="0 0 54 70"><use href="#pbi"/></svg><i style="left:314px;top:577px;width:8px;height:10px;background:#dfdfe0"></i><i style="left:322px;top:577px;width:8px;height:10px;background:#e4e2e0"></i><i style="left:330px;top:577px;width:8px;height:10px;background:#c7c6c5"></i><i style="left:338px;top:577px;width:8px;height:10px;background:#e1e3e4"></i><i style="left:346px;top:577px;width:8px;height:10px;background:#dddfdb"></i><i style="left:354px;top:577px;width:8px;height:10px;background:#c1c0c2"></i><i style="left:362px;top:577px;width:8px;height:10px;background:#c4c2c5"></i><i style="left:370px;top:577px;width:8px;height:10px;background:#d4d2d1"></i><i style="left:378px;top:577px;width:8px;height:10px;background:#c7c7c7"></i><i style="left:386px;top:577px;width:8px;height:10px;background:#e5e1e2"></i><i style="left:394px;top:577px;width:8px;height:10px;background:#d1d2ce"></i><i style="left:402px;top:577px;width:8px;height:10px;background:#c4c1c1"></i><i style="left:410px;top:577px;width:8px;height:10px;background:#d3d3d0"></i><i style="left:418px;top:577px;width:8px;height:10px;background:#e2dee0"></i><i style="left:426px;top:577px;width:8px;height:10px;background:#cfd0d2"></i><i style="left:434px;top:577px;width:8px;height:10px;background:#d3d3d2"></i><i style="left:442px;top:577px;width:8px;height:10px;background:#e2dfdf"></i><i style="left:450px;top:577px;width:8px;height:10px;background:#d1cfcd"></i><i style="left:458px;top:577px;width:8px;height:10px;background:#dfe1df"></i><i style="left:466px;top:577px;width:8px;height:10px;background:#dcdcdb"></i><i style="left:474px;top:577px;width:8px;height:10px;background:#cccdcf"></i><i style="left:482px;top:577px;width:4px;height:10px;background:#e0e0e1"></i><i style="left:314px;top:587px;width:8px;height:10px;background:#e5e3e2"></i><i style="left:322px;top:587px;width:8px;height:10px;background:#ececeb"></i><i style="left:330px;top:587px;width:8px;height:10px;background:#e4e1e2"></i><i style="left:338px;top:587px;width:8px;height:10px;background:#e3e3e3"></i><i style="left:346px;top:587px;width:8px;height:10px;background:#e2dedf"></i><i style="left:354px;top:587px;width:8px;height:10px;background:#dfdee0"></i><i style="left:362px;top:587px;width:8px;height:10px;background:#e4e1e4"></i><i style="left:370px;top:587px;width:8px;height:10px;background:#dfdfdf"></i><i style="left:378px;top:587px;width:8px;height:10px;background:#e7e7e6"></i><i style="left:386px;top:587px;width:8px;height:10px;background:#e8e7ea"></i><i style="left:394px;top:587px;width:8px;height:10px;background:#f0eded"></i><i style="left:402px;top:587px;width:8px;height:10px;background:#ebeaea"></i><i style="left:410px;top:587px;width:8px;height:10px;background:#e2e2e0"></i><i style="left:418px;top:587px;width:8px;height:10px;background:#e5e6e6"></i><i style="left:426px;top:587px;width:8px;height:10px;background:#e4e0e1"></i><i style="left:434px;top:587px;width:8px;height:10px;background:#eae9e6"></i><i style="left:442px;top:587px;width:8px;height:10px;background:#e1dede"></i><i style="left:450px;top:587px;width:8px;height:10px;background:#f1eeee"></i><i style="left:458px;top:587px;width:8px;height:10px;background:#ebe8eb"></i><i style="left:466px;top:587px;width:8px;height:10px;background:#ebeceb"></i><i style="left:474px;top:587px;width:8px;height:10px;background:#e1dedf"></i><i style="left:482px;top:587px;width:4px;height:10px;background:#dfe0de"></i><i style="left:555px;top:572px;width:8px;height:9px;background:#f6f3f2"></i><i style="left:563px;top:572px;width:8px;height:9px;background:#f7f7f3"></i><i style="left:571px;top:572px;width:8px;height:9px;background:#f7f6f5"></i><i style="left:579px;top:572px;width:8px;height:9px;background:#f5f3ef"></i><i style="left:587px;top:572px;width:8px;height:9px;background:#f2f1f2"></i><i style="left:595px;top:572px;width:8px;height:9px;background:#fbf9f9"></i><i style="left:603px;top:572px;width:8px;height:9px;background:#f9f9f7"></i><i style="left:611px;top:572px;width:8px;height:9px;background:#f3f3f0"></i><i style="left:619px;top:572px;width:8px;height:9px;background:#f6f5f5"></i><i style="left:627px;top:572px;width:8px;height:9px;background:#faf6f8"></i><i style="left:635px;top:572px;width:8px;height:9px;background:#f7f4f3"></i><i style="left:643px;top:572px;width:8px;height:9px;background:#f7f9f5"></i><i style="left:651px;top:572px;width:8px;height:9px;background:#fcfaf8"></i><i style="left:659px;top:572px;width:4px;height:9px;background:#f6f3f1"></i><i style="left:555px;top:581px;width:8px;height:9px;background:#bdb9b8"></i><i style="left:563px;top:581px;width:8px;height:9px;background:#b2b0b2"></i><i style="left:571px;top:581px;width:8px;height:9px;background:#c6c5c4"></i><i style="left:579px;top:581px;width:8px;height:9px;background:#c6c5c6"></i><i style="left:587px;top:581px;width:8px;height:9px;background:#bcbab6"></i><i style="left:595px;top:581px;width:8px;height:9px;background:#bdbcbd"></i><i style="left:603px;top:581px;width:8px;height:9px;background:#bcbbbd"></i><i style="left:611px;top:581px;width:8px;height:9px;background:#babab8"></i><i style="left:619px;top:581px;width:8px;height:9px;background:#b5b4b3"></i><i style="left:627px;top:581px;width:8px;height:9px;background:#bfbbbb"></i><i style="left:635px;top:581px;width:8px;height:9px;background:#b0aeac"></i><i style="left:643px;top:581px;width:8px;height:9px;background:#cdc9cc"></i><i style="left:651px;top:581px;width:8px;height:9px;background:#b2afad"></i><i style="left:659px;top:581px;width:4px;height:9px;background:#aca9aa"></i><i style="left:555px;top:590px;width:8px;height:9px;background:#f9faf8"></i><i style="left:563px;top:590px;width:8px;height:9px;background:#f7f7f9"></i><i style="left:571px;top:590px;width:8px;height:9px;background:#fcfbfb"></i><i style="left:579px;top:590px;width:8px;height:9px;background:#fcfcfd"></i><i style="left:587px;top:590px;width:8px;height:9px;background:#f9f9fc"></i><i style="left:595px;top:590px;width:8px;height:9px;background:#fffcfa"></i><i style="left:603px;top:590px;width:8px;height:9px;background:#f9f8f6"></i><i style="left:611px;top:590px;width:8px;height:9px;background:#f8f8f5"></i><i style="left:619px;top:590px;width:8px;height:9px;background:#fcfbfb"></i><i style="left:627px;top:590px;width:8px;height:9px;background:#fcfafc"></i><i style="left:635px;top:590px;width:8px;height:9px;background:#f9f9f7"></i><i style="left:643px;top:590px;width:8px;height:9px;background:#fefbf8"></i><i style="left:651px;top:590px;width:8px;height:9px;background:#fafbfd"></i><i style="left:659px;top:590px;width:4px;height:9px;background:#fcfdfd"></i><i style="left:756px;top:567px;width:8px;height:8px;background:#d5d5d7"></i><i style="left:764px;top:567px;width:8px;height:8px;background:#dddbdd"></i><i style="left:772px;top:567px;width:8px;height:8px;background:#dedbdb"></i><i style="left:780px;top:567px;width:8px;height:8px;background:#edeaea"></i><i style="left:788px;top:567px;width:8px;height:8px;background:#dfe0e2"></i><i style="left:796px;top:567px;width:8px;height:8px;background:#dbdad9"></i><i style="left:804px;top:567px;width:8px;height:8px;background:#d8d9d7"></i><i style="left:812px;top:567px;width:8px;height:8px;background:#dfdfe0"></i><i style="left:820px;top:567px;width:8px;height:8px;background:#e6e5e3"></i><i style="left:828px;top:567px;width:8px;height:8px;background:#d6d6d8"></i><i style="left:836px;top:567px;width:8px;height:8px;background:#d9d6d8"></i><i style="left:844px;top:567px;width:8px;height:8px;background:#e7e7e7"></i><i style="left:852px;top:567px;width:8px;height:8px;background:#d8d8d7"></i><i style="left:860px;top:567px;width:8px;height:8px;background:#dbd7d5"></i><i style="left:868px;top:567px;width:8px;height:8px;background:#d8d6d4"></i><i style="left:876px;top:567px;width:8px;height:8px;background:#dcdbdc"></i><i style="left:884px;top:567px;width:4px;height:8px;background:#dcdedf"></i><i style="left:756px;top:575px;width:8px;height:9px;background:#d1d3d3"></i><i style="left:764px;top:575px;width:8px;height:9px;background:#c4c5c4"></i><i style="left:772px;top:575px;width:8px;height:9px;background:#c8c5c7"></i><i style="left:780px;top:575px;width:8px;height:9px;background:#c6c7c8"></i><i style="left:788px;top:575px;width:8px;height:9px;background:#c6c4c1"></i><i style="left:796px;top:575px;width:8px;height:9px;background:#c3c4c1"></i><i style="left:804px;top:575px;width:8px;height:9px;background:#bfbdb9"></i><i style="left:812px;top:575px;width:8px;height:9px;background:#cdcecf"></i><i style="left:820px;top:575px;width:8px;height:9px;background:#dad8d6"></i><i style="left:828px;top:575px;width:8px;height:9px;background:#d5d5d2"></i><i style="left:836px;top:575px;width:8px;height:9px;background:#d7d6d4"></i><i style="left:844px;top:575px;width:8px;height:9px;background:#d9d6d4"></i><i style="left:852px;top:575px;width:8px;height:9px;background:#babcbb"></i><i style="left:860px;top:575px;width:8px;height:9px;background:#d7d7d8"></i><i style="left:868px;top:575px;width:8px;height:9px;background:#d7d7d7"></i><i style="left:876px;top:575px;width:8px;height:9px;background:#bfbfbf"></i><i style="left:884px;top:575px;width:4px;height:9px;background:#d6d4d5"></i><i style="left:748px;top:584px;width:8px;height:8px;background:#f4f2ee"></i><i style="left:756px;top:584px;width:8px;height:8px;background:#e2e1e4"></i><i style="left:764px;top:584px;width:8px;height:8px;background:#eeeae8"></i><i style="left:772px;top:584px;width:8px;height:8px;background:#f3f2ef"></i><i style="left:780px;top:584px;width:8px;height:8px;background:#e0e2e3"></i><i style="left:788px;top:584px;width:8px;height:8px;background:#e4e3e4"></i><i style="left:796px;top:584px;width:8px;height:8px;background:#eaebec"></i><i style="left:804px;top:584px;width:8px;height:8px;background:#e7e8e9"></i><i style="left:812px;top:584px;width:8px;height:8px;background:#e9e9ea"></i><i style="left:820px;top:584px;width:8px;height:8px;background:#ebe8e8"></i><i style="left:828px;top:584px;width:8px;height:8px;background:#f3f0f2"></i><i style="left:836px;top:584px;width:8px;height:8px;background:#eceae7"></i><i style="left:844px;top:584px;width:8px;height:8px;background:#eceae9"></i><i style="left:852px;top:584px;width:8px;height:8px;background:#e8e5e8"></i><i style="left:860px;top:584px;width:8px;height:8px;background:#eae9e7"></i><i style="left:868px;top:584px;width:8px;height:8px;background:#e8eae6"></i><i style="left:876px;top:584px;width:8px;height:8px;background:#eeeded"></i><i style="left:884px;top:584px;width:4px;height:8px;background:#f2f3f4"></i><i style="left:748px;top:592px;width:8px;height:8px;background:#d6d5d5"></i><i style="left:756px;top:592px;width:8px;height:8px;background:#d6d2d2"></i><i style="left:764px;top:592px;width:8px;height:8px;background:#d0d1cf"></i><i style="left:772px;top:592px;width:8px;height:8px;background:#cac8c4"></i><i style="left:780px;top:592px;width:8px;height:8px;background:#d1cecd"></i><i style="left:788px;top:592px;width:8px;height:8px;background:#cfd1cd"></i><i style="left:796px;top:592px;width:8px;height:8px;background:#cacacb"></i><i style="left:804px;top:592px;width:8px;height:8px;background:#d9d8d6"></i><i style="left:812px;top:592px;width:8px;height:8px;background:#bfbfbd"></i><i style="left:820px;top:592px;width:8px;height:8px;background:#bdbdbb"></i><i style="left:828px;top:592px;width:8px;height:8px;background:#e1e0dd"></i><i style="left:836px;top:592px;width:8px;height:8px;background:#dededb"></i><i style="left:844px;top:592px;width:8px;height:8px;background:#d9d6d7"></i><i style="left:852px;top:592px;width:8px;height:8px;background:#c4c4c5"></i><i style="left:860px;top:592px;width:8px;height:8px;background:#dad9d7"></i><i style="left:868px;top:592px;width:8px;height:8px;background:#cbcbc8"></i><i style="left:876px;top:592px;width:8px;height:8px;background:#c0c1bf"></i><i style="left:884px;top:592px;width:4px;height:8px;background:#d6d4d2"></i><i style="left:966px;top:568px;width:8px;height:8px;background:#e8e8e9"></i><i style="left:974px;top:568px;width:8px;height:8px;background:#e3e1e2"></i><i style="left:982px;top:568px;width:8px;height:8px;background:#e3e2e0"></i><i style="left:990px;top:568px;width:8px;height:8px;background:#c5c7c3"></i><i style="left:998px;top:568px;width:8px;height:8px;background:#dddcdb"></i><i style="left:1006px;top:568px;width:8px;height:8px;background:#c6c6c8"></i><i style="left:1014px;top:568px;width:8px;height:8px;background:#e7e6e7"></i><i style="left:1022px;top:568px;width:8px;height:8px;background:#d3d1d2"></i><i style="left:1030px;top:568px;width:8px;height:8px;background:#e6e5e2"></i><i style="left:1038px;top:568px;width:8px;height:8px;background:#e5e3e3"></i><i style="left:1046px;top:568px;width:8px;height:8px;background:#c9c8c8"></i><i style="left:1054px;top:568px;width:8px;height:8px;background:#c6c4c6"></i><i style="left:1062px;top:568px;width:8px;height:8px;background:#e0e2e3"></i><i style="left:1070px;top:568px;width:8px;height:8px;background:#e0dfdd"></i><i style="left:1078px;top:568px;width:8px;height:8px;background:#d4d5d1"></i><i style="left:1086px;top:568px;width:8px;height:8px;background:#cccccd"></i><i style="left:1094px;top:568px;width:2px;height:8px;background:#d3d4d6"></i><i style="left:966px;top:576px;width:8px;height:8px;background:#e0dfdf"></i><i style="left:974px;top:576px;width:8px;height:8px;background:#d6d6d3"></i><i style="left:982px;top:576px;width:8px;height:8px;background:#d2cecd"></i><i style="left:990px;top:576px;width:8px;height:8px;background:#d5d6d3"></i><i style="left:998px;top:576px;width:8px;height:8px;background:#ebecea"></i><i style="left:1006px;top:576px;width:8px;height:8px;background:#d5d3d4"></i><i style="left:1014px;top:576px;width:8px;height:8px;background:#d6d5d6"></i><i style="left:1022px;top:576px;width:8px;height:8px;background:#e5e2e2"></i><i style="left:1030px;top:576px;width:8px;height:8px;background:#eae8e4"></i><i style="left:1038px;top:576px;width:8px;height:8px;background:#e7e8ea"></i><i style="left:1046px;top:576px;width:8px;height:8px;background:#d7d4d2"></i><i style="left:1054px;top:576px;width:8px;height:8px;background:#dcdad6"></i><i style="left:1062px;top:576px;width:8px;height:8px;background:#dfdedc"></i><i style="left:1070px;top:576px;width:8px;height:8px;background:#ccccce"></i><i style="left:1078px;top:576px;width:8px;height:8px;background:#eaeae8"></i><i style="left:1086px;top:576px;width:8px;height:8px;background:#e2e2e0"></i><i style="left:1094px;top:576px;width:2px;height:8px;background:#d0d2ce"></i><i style="left:999px;top:584px;width:8px;height:8px;background:#c5c7c5"></i><i style="left:1007px;top:584px;width:8px;height:8px;background:#d3d1cd"></i><i style="left:1015px;top:584px;width:8px;height:8px;background:#dbdbda"></i><i style="left:1023px;top:584px;width:8px;height:8px;background:#d0d0ce"></i><i style="left:1031px;top:584px;width:8px;height:8px;background:#cac9c6"></i><i style="left:1039px;top:584px;width:8px;height:8px;background:#cbcdca"></i><i style="left:1047px;top:584px;width:8px;height:8px;background:#d7d6d6"></i><i style="left:1055px;top:584px;width:8px;height:8px;background:#d3d4d3"></i><i style="left:1063px;top:584px;width:8px;height:8px;background:#d5d7d5"></i><i style="left:1071px;top:584px;width:1px;height:8px;background:#dbd9d8"></i><i style="left:999px;top:592px;width:8px;height:9px;background:#f0eeea"></i><i style="left:1007px;top:592px;width:8px;height:9px;background:#f0f1f2"></i><i style="left:1015px;top:592px;width:8px;height:9px;background:#e8e7e9"></i><i style="left:1023px;top:592px;width:8px;height:9px;background:#e8e6e3"></i><i style="left:1031px;top:592px;width:8px;height:9px;background:#e9e6e4"></i><i style="left:1039px;top:592px;width:8px;height:9px;background:#f0f2ef"></i><i style="left:1047px;top:592px;width:8px;height:9px;background:#ececec"></i><i style="left:1055px;top:592px;width:8px;height:9px;background:#f2f3f5"></i><i style="left:1063px;top:592px;width:8px;height:9px;background:#ebeae8"></i><i style="left:1071px;top:592px;width:1px;height:9px;background:#f5f5f2"></i><i style="left:1159px;top:569px;width:8px;height:9px;background:#cacbc8"></i><i style="left:1167px;top:569px;width:8px;height:9px;background:#d7d6d9"></i><i style="left:1175px;top:569px;width:8px;height:9px;background:#bfbebe"></i><i style="left:1183px;top:569px;width:8px;height:9px;background:#bfbebb"></i><i style="left:1191px;top:569px;width:8px;height:9px;background:#d3d2ce"></i><i style="left:1199px;top:569px;width:8px;height:9px;background:#d2d3d1"></i><i style="left:1207px;top:569px;width:8px;height:9px;background:#cccbcc"></i><i style="left:1215px;top:569px;width:8px;height:9px;background:#d8d8da"></i><i style="left:1223px;top:569px;width:8px;height:9px;background:#c8c5c7"></i><i style="left:1231px;top:569px;width:8px;height:9px;background:#bbbbb9"></i><i style="left:1239px;top:569px;width:8px;height:9px;background:#d9d9db"></i><i style="left:1247px;top:569px;width:8px;height:9px;background:#dcdadb"></i><i style="left:1255px;top:569px;width:8px;height:9px;background:#d5d5d2"></i><i style="left:1263px;top:569px;width:8px;height:9px;background:#c1c0c2"></i><i style="left:1271px;top:569px;width:8px;height:9px;background:#cac6c6"></i><i style="left:1279px;top:569px;width:8px;height:9px;background:#cecacd"></i><i style="left:1287px;top:569px;width:8px;height:9px;background:#c1c2c0"></i><i style="left:1295px;top:569px;width:8px;height:9px;background:#dad8d7"></i><i style="left:1303px;top:569px;width:8px;height:9px;background:#ccccce"></i><i style="left:1311px;top:569px;width:8px;height:9px;background:#bebfbb"></i><i style="left:1319px;top:569px;width:6px;height:9px;background:#c6c3c2"></i><i style="left:1159px;top:578px;width:8px;height:9px;background:#eeedec"></i><i style="left:1167px;top:578px;width:8px;height:9px;background:#e9ebe7"></i><i style="left:1175px;top:578px;width:8px;height:9px;background:#ececec"></i><i style="left:1183px;top:578px;width:8px;height:9px;background:#e4e5e5"></i><i style="left:1191px;top:578px;width:8px;height:9px;background:#eeecea"></i><i style="left:1199px;top:578px;width:8px;height:9px;background:#f1f1f1"></i><i style="left:1207px;top:578px;width:8px;height:9px;background:#eff1ee"></i><i style="left:1215px;top:578px;width:8px;height:9px;background:#f4f2f3"></i><i style="left:1223px;top:578px;width:8px;height:9px;background:#f1f2f3"></i><i style="left:1231px;top:578px;width:8px;height:9px;background:#ebece8"></i><i style="left:1239px;top:578px;width:8px;height:9px;background:#f4f2f1"></i><i style="left:1247px;top:578px;width:8px;height:9px;background:#e9e6e7"></i><i style="left:1255px;top:578px;width:8px;height:9px;background:#eae9e9"></i><i style="left:1263px;top:578px;width:8px;height:9px;background:#f1f3f2"></i><i style="left:1271px;top:578px;width:8px;height:9px;background:#f4f5f3"></i><i style="left:1279px;top:578px;width:8px;height:9px;background:#e6e4e1"></i><i style="left:1287px;top:578px;width:8px;height:9px;background:#e6e6e3"></i><i style="left:1295px;top:578px;width:8px;height:9px;background:#e9eae8"></i><i style="left:1303px;top:578px;width:5px;height:9px;background:#eae7e8"></i><i style="left:1201px;top:587px;width:8px;height:9px;background:#c1c0bc"></i><i style="left:1209px;top:587px;width:8px;height:9px;background:#ccc9c9"></i><i style="left:1217px;top:587px;width:8px;height:9px;background:#cfd0cd"></i><i style="left:1225px;top:587px;width:8px;height:9px;background:#cecacd"></i><i style="left:1233px;top:587px;width:8px;height:9px;background:#c7c8c7"></i><i style="left:1241px;top:587px;width:8px;height:9px;background:#ccc9c7"></i><i style="left:1249px;top:587px;width:8px;height:9px;background:#b8b6b8"></i><i style="left:1257px;top:587px;width:8px;height:9px;background:#cbc8c5"></i><i style="left:1265px;top:587px;width:8px;height:9px;background:#c1c1c0"></i><i style="left:1273px;top:587px;width:2px;height:9px;background:#d3d3d3"></i><i style="left:1201px;top:596px;width:8px;height:8px;background:#f3f2f0"></i><i style="left:1209px;top:596px;width:8px;height:8px;background:#f5f4f4"></i><i style="left:1217px;top:596px;width:8px;height:8px;background:#f3f3f5"></i><i style="left:1225px;top:596px;width:8px;height:8px;background:#f8f6f7"></i><i style="left:1233px;top:596px;width:8px;height:8px;background:#f4f2f0"></i><i style="left:1241px;top:596px;width:8px;height:8px;background:#f6f5f3"></i><i style="left:1249px;top:596px;width:8px;height:8px;background:#f6f6f3"></i><i style="left:1257px;top:596px;width:8px;height:8px;background:#f5f3f6"></i><i style="left:1265px;top:596px;width:8px;height:8px;background:#f5f4f4"></i><i style="left:1273px;top:596px;width:2px;height:8px;background:#f9f7f3"></i><i style="left:1370px;top:571px;width:8px;height:9px;background:#bfbfbf"></i><i style="left:1378px;top:571px;width:8px;height:9px;background:#aaacaa"></i><i style="left:1386px;top:571px;width:8px;height:9px;background:#b3b0b2"></i><i style="left:1394px;top:571px;width:8px;height:9px;background:#a7a7a5"></i><i style="left:1402px;top:571px;width:8px;height:9px;background:#bbbbb7"></i><i style="left:1410px;top:571px;width:8px;height:9px;background:#b1b0b1"></i><i style="left:1418px;top:571px;width:8px;height:9px;background:#bebdbe"></i><i style="left:1426px;top:571px;width:8px;height:9px;background:#cacbcc"></i><i style="left:1434px;top:571px;width:8px;height:9px;background:#b0aeac"></i><i style="left:1442px;top:571px;width:8px;height:9px;background:#b6b5b2"></i><i style="left:1450px;top:571px;width:8px;height:9px;background:#c8cac9"></i><i style="left:1458px;top:571px;width:8px;height:9px;background:#b2aeae"></i><i style="left:1466px;top:571px;width:8px;height:9px;background:#c2c1c2"></i><i style="left:1474px;top:571px;width:8px;height:9px;background:#cac6c7"></i><i style="left:1482px;top:571px;width:8px;height:9px;background:#c5c6c5"></i><i style="left:1490px;top:571px;width:8px;height:9px;background:#b9b6b8"></i><i style="left:1498px;top:571px;width:8px;height:9px;background:#a8a8a8"></i><i style="left:1506px;top:571px;width:8px;height:9px;background:#cecdcb"></i><i style="left:1514px;top:571px;width:8px;height:9px;background:#c6c5c5"></i><i style="left:1522px;top:571px;width:8px;height:9px;background:#acadab"></i><i style="left:1530px;top:571px;width:3px;height:9px;background:#a8aaa6"></i><i style="left:1370px;top:580px;width:8px;height:8px;background:#f5f3f5"></i><i style="left:1378px;top:580px;width:8px;height:8px;background:#f3f0ee"></i><i style="left:1386px;top:580px;width:8px;height:8px;background:#efeeeb"></i><i style="left:1394px;top:580px;width:8px;height:8px;background:#eef0ee"></i><i style="left:1402px;top:580px;width:8px;height:8px;background:#f1f0f0"></i><i style="left:1410px;top:580px;width:8px;height:8px;background:#f6f6f6"></i><i style="left:1418px;top:580px;width:8px;height:8px;background:#f1eff0"></i><i style="left:1426px;top:580px;width:8px;height:8px;background:#ebeae9"></i><i style="left:1434px;top:580px;width:8px;height:8px;background:#f3f1f2"></i><i style="left:1442px;top:580px;width:8px;height:8px;background:#f1eeec"></i><i style="left:1450px;top:580px;width:8px;height:8px;background:#f6f3f3"></i><i style="left:1458px;top:580px;width:8px;height:8px;background:#eeeeec"></i><i style="left:1466px;top:580px;width:8px;height:8px;background:#efede9"></i><i style="left:1474px;top:580px;width:8px;height:8px;background:#f5f6f8"></i><i style="left:1482px;top:580px;width:8px;height:8px;background:#f4f3f3"></i><i style="left:1490px;top:580px;width:8px;height:8px;background:#eceae7"></i><i style="left:1498px;top:580px;width:8px;height:8px;background:#e9e9ea"></i><i style="left:1506px;top:580px;width:8px;height:8px;background:#f2f4f4"></i><i style="left:1514px;top:580px;width:8px;height:8px;background:#f5f4f1"></i><i style="left:1522px;top:580px;width:3px;height:8px;background:#f7f5f1"></i><i style="left:1370px;top:589px;width:8px;height:9px;background:#bcbebf"></i><i style="left:1378px;top:589px;width:8px;height:9px;background:#cdcccf"></i><i style="left:1386px;top:589px;width:8px;height:9px;background:#babbb8"></i><i style="left:1394px;top:589px;width:8px;height:9px;background:#b1afaf"></i><i style="left:1402px;top:589px;width:8px;height:9px;background:#d4d3d1"></i><i style="left:1410px;top:589px;width:8px;height:9px;background:#c9cac7"></i><i style="left:1418px;top:589px;width:8px;height:9px;background:#cecccc"></i><i style="left:1426px;top:589px;width:8px;height:9px;background:#b5b4b4"></i><i style="left:1434px;top:589px;width:8px;height:9px;background:#b1b2b3"></i><i style="left:1442px;top:589px;width:8px;height:9px;background:#cbc8c6"></i><i style="left:1450px;top:589px;width:8px;height:9px;background:#cbc9ca"></i><i style="left:1458px;top:589px;width:8px;height:9px;background:#bbb9ba"></i><i style="left:1466px;top:589px;width:8px;height:9px;background:#b5b7b6"></i><i style="left:1474px;top:589px;width:8px;height:9px;background:#bdbeba"></i><i style="left:1482px;top:589px;width:8px;height:9px;background:#cacacd"></i><i style="left:1490px;top:589px;width:8px;height:9px;background:#b6b6b4"></i><i style="left:1498px;top:589px;width:8px;height:9px;background:#bab7b7"></i><i style="left:1506px;top:589px;width:8px;height:9px;background:#d4d4d6"></i><i style="left:1514px;top:589px;width:8px;height:9px;background:#babbbd"></i><i style="left:1522px;top:589px;width:3px;height:9px;background:#b8b9bb"></i><i style="left:1578px;top:569px;width:8px;height:9px;background:#dfdddf"></i><i style="left:1586px;top:569px;width:8px;height:9px;background:#c9cbc7"></i><i style="left:1594px;top:569px;width:8px;height:9px;background:#b9b9bc"></i><i style="left:1602px;top:569px;width:8px;height:9px;background:#c1bfbe"></i><i style="left:1610px;top:569px;width:8px;height:9px;background:#c6c5c1"></i><i style="left:1618px;top:569px;width:8px;height:9px;background:#cfcfd0"></i><i style="left:1626px;top:569px;width:8px;height:9px;background:#d8d7d4"></i><i style="left:1634px;top:569px;width:8px;height:9px;background:#c2c3c5"></i><i style="left:1642px;top:569px;width:8px;height:9px;background:#c6c4c4"></i><i style="left:1650px;top:569px;width:8px;height:9px;background:#d7d7d5"></i><i style="left:1658px;top:569px;width:8px;height:9px;background:#cdcbcd"></i><i style="left:1666px;top:569px;width:8px;height:9px;background:#d2d0cc"></i><i style="left:1674px;top:569px;width:8px;height:9px;background:#c6c3c4"></i><i style="left:1682px;top:569px;width:8px;height:9px;background:#d5d5d5"></i><i style="left:1690px;top:569px;width:8px;height:9px;background:#d5d1d2"></i><i style="left:1698px;top:569px;width:8px;height:9px;background:#cbcccb"></i><i style="left:1706px;top:569px;width:8px;height:9px;background:#cdcacc"></i><i style="left:1714px;top:569px;width:8px;height:9px;background:#bdbbbd"></i><i style="left:1722px;top:569px;width:8px;height:9px;background:#c4c4c5"></i><i style="left:1730px;top:569px;width:8px;height:9px;background:#dadad6"></i><i style="left:1738px;top:569px;width:4px;height:9px;background:#dfdcdc"></i><i style="left:1578px;top:578px;width:8px;height:10px;background:#e7e7e8"></i><i style="left:1586px;top:578px;width:8px;height:10px;background:#e4e2e4"></i><i style="left:1594px;top:578px;width:8px;height:10px;background:#e8e8e4"></i><i style="left:1602px;top:578px;width:8px;height:10px;background:#efeeea"></i><i style="left:1610px;top:578px;width:8px;height:10px;background:#f3f1f0"></i><i style="left:1618px;top:578px;width:8px;height:10px;background:#f0eeec"></i><i style="left:1626px;top:578px;width:8px;height:10px;background:#f2f1f2"></i><i style="left:1634px;top:578px;width:8px;height:10px;background:#f3f2f1"></i><i style="left:1642px;top:578px;width:8px;height:10px;background:#e6e6e9"></i><i style="left:1650px;top:578px;width:8px;height:10px;background:#ebebeb"></i><i style="left:1658px;top:578px;width:8px;height:10px;background:#eeedea"></i><i style="left:1666px;top:578px;width:8px;height:10px;background:#e7e8e7"></i><i style="left:1674px;top:578px;width:8px;height:10px;background:#e5e5e4"></i><i style="left:1682px;top:578px;width:8px;height:10px;background:#e3e3e4"></i><i style="left:1690px;top:578px;width:8px;height:10px;background:#e2e1e2"></i><i style="left:1698px;top:578px;width:8px;height:10px;background:#e0e0df"></i><i style="left:1706px;top:578px;width:8px;height:10px;background:#f5f4f4"></i><i style="left:1714px;top:578px;width:8px;height:10px;background:#e8e7e7"></i><i style="left:1722px;top:578px;width:4px;height:10px;background:#e6e5e5"></i><i style="left:1603px;top:588px;width:8px;height:9px;background:#bdbbbb"></i><i style="left:1611px;top:588px;width:8px;height:9px;background:#c0c0bd"></i><i style="left:1619px;top:588px;width:8px;height:9px;background:#b4b4b6"></i><i style="left:1627px;top:588px;width:8px;height:9px;background:#cdcbc8"></i><i style="left:1635px;top:588px;width:8px;height:9px;background:#ccceca"></i><i style="left:1643px;top:588px;width:8px;height:9px;background:#c5c5c2"></i><i style="left:1651px;top:588px;width:8px;height:9px;background:#bcb9b7"></i><i style="left:1659px;top:588px;width:8px;height:9px;background:#d0d0ce"></i><i style="left:1667px;top:588px;width:8px;height:9px;background:#c2c1c1"></i><i style="left:1675px;top:588px;width:8px;height:9px;background:#c9cbc7"></i><i style="left:1683px;top:588px;width:8px;height:9px;background:#b8b8b9"></i><i style="left:1691px;top:588px;width:8px;height:9px;background:#d1d1d0"></i><i style="left:1699px;top:588px;width:8px;height:9px;background:#c7c7ca"></i><i style="left:1707px;top:588px;width:8px;height:9px;background:#cac8c7"></i><i style="left:1715px;top:588px;width:2px;height:9px;background:#bcbab9"></i><i style="left:1603px;top:597px;width:8px;height:9px;background:#f3f0f0"></i><i style="left:1611px;top:597px;width:8px;height:9px;background:#f6f3f4"></i><i style="left:1619px;top:597px;width:8px;height:9px;background:#f0f1ed"></i><i style="left:1627px;top:597px;width:8px;height:9px;background:#f4f3f2"></i><i style="left:1635px;top:597px;width:8px;height:9px;background:#eff1ef"></i><i style="left:1643px;top:597px;width:8px;height:9px;background:#f1eeef"></i><i style="left:1651px;top:597px;width:8px;height:9px;background:#ecedec"></i><i style="left:1659px;top:597px;width:8px;height:9px;background:#f2f2ef"></i><i style="left:1667px;top:597px;width:8px;height:9px;background:#f8f6f6"></i><i style="left:1675px;top:597px;width:8px;height:9px;background:#efeff2"></i><i style="left:1683px;top:597px;width:8px;height:9px;background:#f7f3f4"></i><i style="left:1691px;top:597px;width:8px;height:9px;background:#f0efef"></i><i style="left:1699px;top:597px;width:8px;height:9px;background:#f0efef"></i><i style="left:1707px;top:597px;width:8px;height:9px;background:#f7f6f4"></i><i style="left:1715px;top:597px;width:2px;height:9px;background:#f3f0f0"></i><i style="left:319px;top:794px;width:8px;height:9px;background:#f1eeed"></i><i style="left:327px;top:794px;width:8px;height:9px;background:#f0f2f3"></i><i style="left:335px;top:794px;width:8px;height:9px;background:#eae7e6"></i><i style="left:343px;top:794px;width:8px;height:9px;background:#e5e3e3"></i><i style="left:351px;top:794px;width:8px;height:9px;background:#efedec"></i><i style="left:359px;top:794px;width:8px;height:9px;background:#e6e4e4"></i><i style="left:367px;top:794px;width:8px;height:9px;background:#e5e7e5"></i><i style="left:375px;top:794px;width:8px;height:9px;background:#e4e5e6"></i><i style="left:383px;top:794px;width:8px;height:9px;background:#eeeaeb"></i><i style="left:391px;top:794px;width:8px;height:9px;background:#e4e1df"></i><i style="left:399px;top:794px;width:8px;height:9px;background:#eeebec"></i><i style="left:407px;top:794px;width:8px;height:9px;background:#e8e8e5"></i><i style="left:415px;top:794px;width:8px;height:9px;background:#e5e6e3"></i><i style="left:423px;top:794px;width:8px;height:9px;background:#e6e7e3"></i><i style="left:431px;top:794px;width:8px;height:9px;background:#e6e4e3"></i><i style="left:439px;top:794px;width:8px;height:9px;background:#e9e8e7"></i><i style="left:447px;top:794px;width:8px;height:9px;background:#eae7e5"></i><i style="left:455px;top:794px;width:8px;height:9px;background:#e0e2e3"></i><i style="left:463px;top:794px;width:6px;height:9px;background:#f3f2ee"></i><i style="left:319px;top:803px;width:8px;height:9px;background:#d0cfce"></i><i style="left:327px;top:803px;width:8px;height:9px;background:#cccccd"></i><i style="left:335px;top:803px;width:8px;height:9px;background:#cccdcb"></i><i style="left:343px;top:803px;width:8px;height:9px;background:#bdbebc"></i><i style="left:351px;top:803px;width:8px;height:9px;background:#b0b1af"></i><i style="left:359px;top:803px;width:8px;height:9px;background:#d5d1d1"></i><i style="left:367px;top:803px;width:8px;height:9px;background:#d1d0cc"></i><i style="left:375px;top:803px;width:8px;height:9px;background:#b6b6b3"></i><i style="left:383px;top:803px;width:8px;height:9px;background:#c4c3bf"></i><i style="left:391px;top:803px;width:8px;height:9px;background:#bfc1c0"></i><i style="left:399px;top:803px;width:8px;height:9px;background:#cdc9cb"></i><i style="left:407px;top:803px;width:8px;height:9px;background:#d0cfce"></i><i style="left:415px;top:803px;width:8px;height:9px;background:#b3b4b1"></i><i style="left:423px;top:803px;width:8px;height:9px;background:#b7b8b7"></i><i style="left:431px;top:803px;width:8px;height:9px;background:#d0d0ce"></i><i style="left:439px;top:803px;width:8px;height:9px;background:#bbb9bb"></i><i style="left:447px;top:803px;width:8px;height:9px;background:#d4d3d0"></i><i style="left:455px;top:803px;width:8px;height:9px;background:#c9cac7"></i><i style="left:463px;top:803px;width:8px;height:9px;background:#b8b9b6"></i><i style="left:471px;top:803px;width:8px;height:9px;background:#cdcccc"></i><i style="left:479px;top:803px;width:7px;height:9px;background:#bebebc"></i><i style="left:361px;top:812px;width:8px;height:9px;background:#edeeee"></i><i style="left:369px;top:812px;width:8px;height:9px;background:#e8e7ea"></i><i style="left:377px;top:812px;width:8px;height:9px;background:#f5f4f3"></i><i style="left:385px;top:812px;width:8px;height:9px;background:#e5e7e6"></i><i style="left:393px;top:812px;width:8px;height:9px;background:#f1efef"></i><i style="left:401px;top:812px;width:8px;height:9px;background:#e4e1e1"></i><i style="left:409px;top:812px;width:8px;height:9px;background:#edeaea"></i><i style="left:417px;top:812px;width:8px;height:9px;background:#f1eeee"></i><i style="left:425px;top:812px;width:8px;height:9px;background:#f1f2f3"></i><i style="left:433px;top:812px;width:8px;height:9px;background:#e6e4e5"></i><i style="left:441px;top:812px;width:3px;height:9px;background:#e2e0e2"></i><i style="left:361px;top:821px;width:8px;height:9px;background:#c6c7c7"></i><i style="left:369px;top:821px;width:8px;height:9px;background:#cbc9c5"></i><i style="left:377px;top:821px;width:8px;height:9px;background:#cacaca"></i><i style="left:385px;top:821px;width:8px;height:9px;background:#d8d8d6"></i><i style="left:393px;top:821px;width:8px;height:9px;background:#d0cdcf"></i><i style="left:401px;top:821px;width:8px;height:9px;background:#dddfdb"></i><i style="left:409px;top:821px;width:8px;height:9px;background:#cbcdc9"></i><i style="left:417px;top:821px;width:8px;height:9px;background:#d7d6d6"></i><i style="left:425px;top:821px;width:8px;height:9px;background:#c4c3c5"></i><i style="left:433px;top:821px;width:8px;height:9px;background:#c5c5c7"></i><i style="left:441px;top:821px;width:3px;height:9px;background:#dddbdc"></i><i style="left:527px;top:795px;width:8px;height:8px;background:#ede9ea"></i><i style="left:535px;top:795px;width:8px;height:8px;background:#dedada"></i><i style="left:543px;top:795px;width:8px;height:8px;background:#e8e5e4"></i><i style="left:551px;top:795px;width:8px;height:8px;background:#dee0e0"></i><i style="left:559px;top:795px;width:8px;height:8px;background:#e3e2e3"></i><i style="left:567px;top:795px;width:8px;height:8px;background:#eaebea"></i><i style="left:575px;top:795px;width:8px;height:8px;background:#e1dfdd"></i><i style="left:583px;top:795px;width:8px;height:8px;background:#e9e6e7"></i><i style="left:591px;top:795px;width:8px;height:8px;background:#e9e7e4"></i><i style="left:599px;top:795px;width:8px;height:8px;background:#e0dedd"></i><i style="left:607px;top:795px;width:8px;height:8px;background:#ebe8e9"></i><i style="left:615px;top:795px;width:8px;height:8px;background:#e3e4e2"></i><i style="left:623px;top:795px;width:8px;height:8px;background:#e0e0de"></i><i style="left:631px;top:795px;width:8px;height:8px;background:#e8e7e5"></i><i style="left:639px;top:795px;width:8px;height:8px;background:#e0e0df"></i><i style="left:647px;top:795px;width:8px;height:8px;background:#e8eae8"></i><i style="left:655px;top:795px;width:8px;height:8px;background:#e5e7e6"></i><i style="left:663px;top:795px;width:8px;height:8px;background:#e7e7e3"></i><i style="left:671px;top:795px;width:8px;height:8px;background:#e8e9ea"></i><i style="left:527px;top:803px;width:8px;height:9px;background:#cbc9cb"></i><i style="left:535px;top:803px;width:8px;height:9px;background:#d6d7d4"></i><i style="left:543px;top:803px;width:8px;height:9px;background:#d4d0d3"></i><i style="left:551px;top:803px;width:8px;height:9px;background:#dfdfe0"></i><i style="left:559px;top:803px;width:8px;height:9px;background:#cac7c5"></i><i style="left:567px;top:803px;width:8px;height:9px;background:#dddbd7"></i><i style="left:575px;top:803px;width:8px;height:9px;background:#e1e0dd"></i><i style="left:583px;top:803px;width:8px;height:9px;background:#dbdbdb"></i><i style="left:591px;top:803px;width:8px;height:9px;background:#c9c7c9"></i><i style="left:599px;top:803px;width:8px;height:9px;background:#dededc"></i><i style="left:607px;top:803px;width:8px;height:9px;background:#d3d2d3"></i><i style="left:615px;top:803px;width:8px;height:9px;background:#e6e3e5"></i><i style="left:623px;top:803px;width:8px;height:9px;background:#d3d5d4"></i><i style="left:631px;top:803px;width:8px;height:9px;background:#dad8d6"></i><i style="left:639px;top:803px;width:8px;height:9px;background:#e3e1e2"></i><i style="left:647px;top:803px;width:8px;height:9px;background:#e6e5e2"></i><i style="left:655px;top:803px;width:8px;height:9px;background:#c6c5c6"></i><i style="left:663px;top:803px;width:8px;height:9px;background:#d0cecf"></i><i style="left:671px;top:803px;width:8px;height:9px;background:#bfbfbf"></i><i style="left:679px;top:803px;width:8px;height:9px;background:#e6e4e5"></i><i style="left:687px;top:803px;width:8px;height:9px;background:#d6d4d3"></i><i style="left:551px;top:812px;width:8px;height:9px;background:#e3e1e2"></i><i style="left:559px;top:812px;width:8px;height:9px;background:#dfdddc"></i><i style="left:567px;top:812px;width:8px;height:9px;background:#d4d2d0"></i><i style="left:575px;top:812px;width:8px;height:9px;background:#dddfdb"></i><i style="left:583px;top:812px;width:8px;height:9px;background:#e0dfe0"></i><i style="left:591px;top:812px;width:8px;height:9px;background:#dedbdd"></i><i style="left:599px;top:812px;width:8px;height:9px;background:#e4e0df"></i><i style="left:607px;top:812px;width:8px;height:9px;background:#dfdddd"></i><i style="left:615px;top:812px;width:8px;height:9px;background:#ebe9e7"></i><i style="left:623px;top:812px;width:8px;height:9px;background:#e9e7e3"></i><i style="left:631px;top:812px;width:8px;height:9px;background:#d6d5d4"></i><i style="left:639px;top:812px;width:8px;height:9px;background:#d3d3d0"></i><i style="left:647px;top:812px;width:8px;height:9px;background:#d4d4d2"></i><i style="left:655px;top:812px;width:8px;height:9px;background:#edeaec"></i><i style="left:551px;top:821px;width:8px;height:10px;background:#d4d1d2"></i><i style="left:559px;top:821px;width:8px;height:10px;background:#d7d3d4"></i><i style="left:567px;top:821px;width:8px;height:10px;background:#d1d3d3"></i><i style="left:575px;top:821px;width:8px;height:10px;background:#cececf"></i><i style="left:583px;top:821px;width:8px;height:10px;background:#cbc8c6"></i><i style="left:591px;top:821px;width:8px;height:10px;background:#ddd9d9"></i><i style="left:599px;top:821px;width:8px;height:10px;background:#dfe1dd"></i><i style="left:607px;top:821px;width:8px;height:10px;background:#c8c7c8"></i><i style="left:615px;top:821px;width:8px;height:10px;background:#dbd9d6"></i><i style="left:623px;top:821px;width:8px;height:10px;background:#d5d4d0"></i><i style="left:631px;top:821px;width:8px;height:10px;background:#d0d1d1"></i><i style="left:639px;top:821px;width:8px;height:10px;background:#ccccca"></i><i style="left:647px;top:821px;width:8px;height:10px;background:#d4d1d1"></i><i style="left:655px;top:821px;width:8px;height:10px;background:#e1e3df"></i><i style="left:737px;top:795px;width:8px;height:8px;background:#f3f0ee"></i><i style="left:745px;top:795px;width:8px;height:8px;background:#f1f1f0"></i><i style="left:753px;top:795px;width:8px;height:8px;background:#dfe0e2"></i><i style="left:761px;top:795px;width:8px;height:8px;background:#e1dddd"></i><i style="left:769px;top:795px;width:8px;height:8px;background:#e3e2e1"></i><i style="left:777px;top:795px;width:8px;height:8px;background:#dadadb"></i><i style="left:785px;top:795px;width:8px;height:8px;background:#ecedea"></i><i style="left:793px;top:795px;width:8px;height:8px;background:#eeedec"></i><i style="left:801px;top:795px;width:8px;height:8px;background:#dcddda"></i><i style="left:809px;top:795px;width:8px;height:8px;background:#e4e5e4"></i><i style="left:817px;top:795px;width:8px;height:8px;background:#ebe8e8"></i><i style="left:825px;top:795px;width:8px;height:8px;background:#dddedd"></i><i style="left:833px;top:795px;width:8px;height:8px;background:#f3eff0"></i><i style="left:841px;top:795px;width:8px;height:8px;background:#e6e5e4"></i><i style="left:849px;top:795px;width:8px;height:8px;background:#dbdad9"></i><i style="left:857px;top:795px;width:8px;height:8px;background:#e1e0de"></i><i style="left:865px;top:795px;width:8px;height:8px;background:#dcdbdc"></i><i style="left:873px;top:795px;width:8px;height:8px;background:#e5e6e7"></i><i style="left:881px;top:795px;width:8px;height:8px;background:#e8e7e9"></i><i style="left:889px;top:795px;width:1px;height:8px;background:#dcdddc"></i><i style="left:737px;top:803px;width:8px;height:9px;background:#e1e1df"></i><i style="left:745px;top:803px;width:8px;height:9px;background:#dcdbd9"></i><i style="left:753px;top:803px;width:8px;height:9px;background:#d8d9db"></i><i style="left:761px;top:803px;width:8px;height:9px;background:#c0bebd"></i><i style="left:769px;top:803px;width:8px;height:9px;background:#c5c5c5"></i><i style="left:777px;top:803px;width:8px;height:9px;background:#e0e1e0"></i><i style="left:785px;top:803px;width:8px;height:9px;background:#dbdada"></i><i style="left:793px;top:803px;width:8px;height:9px;background:#d4d5d4"></i><i style="left:801px;top:803px;width:8px;height:9px;background:#d9d5d5"></i><i style="left:809px;top:803px;width:8px;height:9px;background:#dfdbda"></i><i style="left:817px;top:803px;width:8px;height:9px;background:#dadbd9"></i><i style="left:825px;top:803px;width:8px;height:9px;background:#dddadb"></i><i style="left:833px;top:803px;width:8px;height:9px;background:#cfcece"></i><i style="left:841px;top:803px;width:8px;height:9px;background:#cbcacd"></i><i style="left:849px;top:803px;width:8px;height:9px;background:#dddfdd"></i><i style="left:857px;top:803px;width:8px;height:9px;background:#d5d7d8"></i><i style="left:865px;top:803px;width:8px;height:9px;background:#e2e2df"></i><i style="left:873px;top:803px;width:8px;height:9px;background:#d5d7d4"></i><i style="left:881px;top:803px;width:8px;height:9px;background:#cdcbce"></i><i style="left:889px;top:803px;width:8px;height:9px;background:#c3c5c3"></i><i style="left:897px;top:803px;width:1px;height:9px;background:#dfdddb"></i><i style="left:761px;top:812px;width:8px;height:10px;background:#e7e5e4"></i><i style="left:769px;top:812px;width:8px;height:10px;background:#d9dad9"></i><i style="left:777px;top:812px;width:8px;height:10px;background:#dad9d9"></i><i style="left:785px;top:812px;width:8px;height:10px;background:#e8e8e6"></i><i style="left:793px;top:812px;width:8px;height:10px;background:#d1d1d2"></i><i style="left:801px;top:812px;width:8px;height:10px;background:#e7e6e3"></i><i style="left:809px;top:812px;width:8px;height:10px;background:#e7e4e5"></i><i style="left:817px;top:812px;width:8px;height:10px;background:#dadada"></i><i style="left:825px;top:812px;width:8px;height:10px;background:#d4d4d5"></i><i style="left:833px;top:812px;width:8px;height:10px;background:#d6d7d4"></i><i style="left:841px;top:812px;width:8px;height:10px;background:#e3e3e1"></i><i style="left:849px;top:812px;width:8px;height:10px;background:#e9e7e8"></i><i style="left:857px;top:812px;width:8px;height:10px;background:#e6e8e6"></i><i style="left:865px;top:812px;width:8px;height:10px;background:#e4e5e2"></i><i style="left:873px;top:812px;width:1px;height:10px;background:#e4e3e3"></i><i style="left:761px;top:822px;width:8px;height:9px;background:#d4d3d4"></i><i style="left:769px;top:822px;width:8px;height:9px;background:#e7e5e3"></i><i style="left:777px;top:822px;width:8px;height:9px;background:#d3d5d5"></i><i style="left:785px;top:822px;width:8px;height:9px;background:#c5c6c2"></i><i style="left:793px;top:822px;width:8px;height:9px;background:#c5c3c3"></i><i style="left:801px;top:822px;width:8px;height:9px;background:#c9c8c9"></i><i style="left:809px;top:822px;width:8px;height:9px;background:#dedada"></i><i style="left:817px;top:822px;width:8px;height:9px;background:#e2e3e3"></i><i style="left:825px;top:822px;width:8px;height:9px;background:#dfdfdf"></i><i style="left:833px;top:822px;width:8px;height:9px;background:#e1dde0"></i><i style="left:841px;top:822px;width:8px;height:9px;background:#d1d0d0"></i><i style="left:849px;top:822px;width:8px;height:9px;background:#ccc9c7"></i><i style="left:857px;top:822px;width:8px;height:9px;background:#e6e4e6"></i><i style="left:865px;top:822px;width:8px;height:9px;background:#cccdcb"></i><i style="left:873px;top:822px;width:1px;height:9px;background:#d0d0d0"></i><i style="left:970px;top:794px;width:8px;height:9px;background:#ebe8e7"></i><i style="left:978px;top:794px;width:8px;height:9px;background:#f3f1f0"></i><i style="left:986px;top:794px;width:8px;height:9px;background:#efecef"></i><i style="left:994px;top:794px;width:8px;height:9px;background:#e4e6e7"></i><i style="left:1002px;top:794px;width:8px;height:9px;background:#ecedeb"></i><i style="left:1010px;top:794px;width:8px;height:9px;background:#e7e8e5"></i><i style="left:1018px;top:794px;width:8px;height:9px;background:#f3efef"></i><i style="left:1026px;top:794px;width:8px;height:9px;background:#f1f3f2"></i><i style="left:1034px;top:794px;width:8px;height:9px;background:#e3e4e3"></i><i style="left:1042px;top:794px;width:8px;height:9px;background:#eae9ec"></i><i style="left:1050px;top:794px;width:8px;height:9px;background:#e6e7e7"></i><i style="left:1058px;top:794px;width:8px;height:9px;background:#e3e3e3"></i><i style="left:1066px;top:794px;width:8px;height:9px;background:#e7e6e9"></i><i style="left:1074px;top:794px;width:3px;height:9px;background:#e9e6e5"></i><i style="left:970px;top:803px;width:8px;height:9px;background:#cecccd"></i><i style="left:978px;top:803px;width:8px;height:9px;background:#d0ced0"></i><i style="left:986px;top:803px;width:8px;height:9px;background:#bbbbbc"></i><i style="left:994px;top:803px;width:8px;height:9px;background:#d6d8d9"></i><i style="left:1002px;top:803px;width:8px;height:9px;background:#d0cdca"></i><i style="left:1010px;top:803px;width:8px;height:9px;background:#d9d7d5"></i><i style="left:1018px;top:803px;width:8px;height:9px;background:#dbd9d9"></i><i style="left:1026px;top:803px;width:8px;height:9px;background:#bebebe"></i><i style="left:1034px;top:803px;width:8px;height:9px;background:#c8c7c6"></i><i style="left:1042px;top:803px;width:8px;height:9px;background:#b8b9b7"></i><i style="left:1050px;top:803px;width:8px;height:9px;background:#cbc9cc"></i><i style="left:1058px;top:803px;width:8px;height:9px;background:#d9d8db"></i><i style="left:1066px;top:803px;width:8px;height:9px;background:#cecbcb"></i><i style="left:1074px;top:803px;width:8px;height:9px;background:#c4c3c1"></i><i style="left:1082px;top:803px;width:8px;height:9px;background:#cfd0ce"></i><i style="left:1090px;top:803px;width:2px;height:9px;background:#c8c7c5"></i><i style="left:970px;top:812px;width:8px;height:10px;background:#d9d7d8"></i><i style="left:978px;top:812px;width:8px;height:10px;background:#dededf"></i><i style="left:986px;top:812px;width:8px;height:10px;background:#e2e1de"></i><i style="left:994px;top:812px;width:8px;height:10px;background:#dfddde"></i><i style="left:1002px;top:812px;width:8px;height:10px;background:#d5d6d3"></i><i style="left:1010px;top:812px;width:8px;height:10px;background:#d8d8da"></i><i style="left:1018px;top:812px;width:8px;height:10px;background:#dededf"></i><i style="left:1026px;top:812px;width:8px;height:10px;background:#e2e1e4"></i><i style="left:1034px;top:812px;width:8px;height:10px;background:#dddddf"></i><i style="left:1042px;top:812px;width:8px;height:10px;background:#f0edeb"></i><i style="left:1050px;top:812px;width:8px;height:10px;background:#dbddd9"></i><i style="left:1058px;top:812px;width:8px;height:10px;background:#e5e3e0"></i><i style="left:1066px;top:812px;width:8px;height:10px;background:#e0e2df"></i><i style="left:1074px;top:812px;width:8px;height:10px;background:#eaeae9"></i><i style="left:1082px;top:812px;width:3px;height:10px;background:#d5d4d5"></i><i style="left:970px;top:822px;width:8px;height:9px;background:#d9d5d6"></i><i style="left:978px;top:822px;width:8px;height:9px;background:#c8c5c6"></i><i style="left:986px;top:822px;width:8px;height:9px;background:#dfdedf"></i><i style="left:994px;top:822px;width:8px;height:9px;background:#cbcaca"></i><i style="left:1002px;top:822px;width:8px;height:9px;background:#c4c6c7"></i><i style="left:1010px;top:822px;width:8px;height:9px;background:#d8d6d4"></i><i style="left:1018px;top:822px;width:8px;height:9px;background:#e7e4e3"></i><i style="left:1026px;top:822px;width:8px;height:9px;background:#dededd"></i><i style="left:1034px;top:822px;width:8px;height:9px;background:#e0e0df"></i><i style="left:1042px;top:822px;width:8px;height:9px;background:#dbdbde"></i><i style="left:1050px;top:822px;width:8px;height:9px;background:#dad8d7"></i><i style="left:1058px;top:822px;width:8px;height:9px;background:#dad6d8"></i><i style="left:1066px;top:822px;width:8px;height:9px;background:#dedcd9"></i><i style="left:1074px;top:822px;width:8px;height:9px;background:#cecdcf"></i><i style="left:1082px;top:822px;width:3px;height:9px;background:#c7c7c9"></i><i style="left:1181px;top:792px;width:8px;height:9px;background:#f5f6f7"></i><i style="left:1189px;top:792px;width:8px;height:9px;background:#f9f6f8"></i><i style="left:1197px;top:792px;width:8px;height:9px;background:#f8f9f9"></i><i style="left:1205px;top:792px;width:8px;height:9px;background:#f9fbfb"></i><i style="left:1213px;top:792px;width:8px;height:9px;background:#fcf8f9"></i><i style="left:1221px;top:792px;width:8px;height:9px;background:#f9faf8"></i><i style="left:1229px;top:792px;width:8px;height:9px;background:#fefcfc"></i><i style="left:1237px;top:792px;width:8px;height:9px;background:#f9fbfc"></i><i style="left:1245px;top:792px;width:8px;height:9px;background:#f8f9fb"></i><i style="left:1253px;top:792px;width:8px;height:9px;background:#fbf7f6"></i><i style="left:1261px;top:792px;width:8px;height:9px;background:#fbf8f7"></i><i style="left:1269px;top:792px;width:8px;height:9px;background:#faf6f7"></i><i style="left:1277px;top:792px;width:8px;height:9px;background:#f5f6f3"></i><i style="left:1285px;top:792px;width:8px;height:9px;background:#f8f4f5"></i><i style="left:1293px;top:792px;width:1px;height:9px;background:#f6f8f5"></i><i style="left:1188px;top:802px;width:8px;height:9px;background:#c6c8c5"></i><i style="left:1196px;top:802px;width:8px;height:9px;background:#cfd1cf"></i><i style="left:1204px;top:802px;width:8px;height:9px;background:#b7b7b5"></i><i style="left:1212px;top:802px;width:8px;height:9px;background:#adabaa"></i><i style="left:1220px;top:802px;width:8px;height:9px;background:#c6c4c4"></i><i style="left:1228px;top:802px;width:8px;height:9px;background:#c4c1c3"></i><i style="left:1236px;top:802px;width:8px;height:9px;background:#c1c2c3"></i><i style="left:1244px;top:802px;width:8px;height:9px;background:#c3bfbd"></i><i style="left:1252px;top:802px;width:8px;height:9px;background:#bcbbb9"></i><i style="left:1260px;top:802px;width:8px;height:9px;background:#c7c9c8"></i><i style="left:1268px;top:802px;width:8px;height:9px;background:#b2b3b0"></i><i style="left:1276px;top:802px;width:8px;height:9px;background:#b1afae"></i><i style="left:1284px;top:802px;width:8px;height:9px;background:#d0d0d1"></i><i style="left:1292px;top:802px;width:2px;height:9px;background:#c4c5c3"></i><i style="left:1204px;top:811px;width:8px;height:9px;background:#f0efec"></i><i style="left:1212px;top:811px;width:8px;height:9px;background:#dfddde"></i><i style="left:1220px;top:811px;width:8px;height:9px;background:#f0edeb"></i><i style="left:1228px;top:811px;width:8px;height:9px;background:#e0e1e2"></i><i style="left:1236px;top:811px;width:8px;height:9px;background:#f3f1ef"></i><i style="left:1244px;top:811px;width:8px;height:9px;background:#eeebed"></i><i style="left:1252px;top:811px;width:8px;height:9px;background:#edeeed"></i><i style="left:1260px;top:811px;width:1px;height:9px;background:#eeeeec"></i><i style="left:1204px;top:820px;width:8px;height:10px;background:#c2c1c1"></i><i style="left:1212px;top:820px;width:8px;height:10px;background:#dededd"></i><i style="left:1220px;top:820px;width:8px;height:10px;background:#d9d8d5"></i><i style="left:1228px;top:820px;width:8px;height:10px;background:#d8d5d4"></i><i style="left:1236px;top:820px;width:8px;height:10px;background:#cdcdce"></i><i style="left:1244px;top:820px;width:8px;height:10px;background:#c2c3c4"></i><i style="left:1252px;top:820px;width:8px;height:10px;background:#cac9c8"></i><i style="left:1260px;top:820px;width:8px;height:10px;background:#c7c4c3"></i><i style="left:1268px;top:820px;width:8px;height:10px;background:#e7e5e5"></i><i style="left:1276px;top:820px;width:8px;height:10px;background:#c7c9c5"></i><i style="left:1284px;top:820px;width:2px;height:10px;background:#cecdcd"></i><i style="left:1381px;top:802px;width:8px;height:9px;background:#f4f3f1"></i><i style="left:1389px;top:802px;width:8px;height:9px;background:#f3f4f3"></i><i style="left:1397px;top:802px;width:8px;height:9px;background:#faf8f5"></i><i style="left:1405px;top:802px;width:8px;height:9px;background:#faf8f7"></i><i style="left:1413px;top:802px;width:8px;height:9px;background:#f6f8f6"></i><i style="left:1421px;top:802px;width:8px;height:9px;background:#f9f8f6"></i><i style="left:1429px;top:802px;width:8px;height:9px;background:#f5f5f3"></i><i style="left:1437px;top:802px;width:8px;height:9px;background:#f4f3f6"></i><i style="left:1445px;top:802px;width:8px;height:9px;background:#fbf9f9"></i><i style="left:1453px;top:802px;width:8px;height:9px;background:#f6f7f3"></i><i style="left:1461px;top:802px;width:8px;height:9px;background:#f5f5f3"></i><i style="left:1469px;top:802px;width:8px;height:9px;background:#f9f7f8"></i><i style="left:1477px;top:802px;width:8px;height:9px;background:#f6f6f8"></i><i style="left:1485px;top:802px;width:8px;height:9px;background:#f6f2f2"></i><i style="left:1493px;top:802px;width:8px;height:9px;background:#f9f7f9"></i><i style="left:1501px;top:802px;width:8px;height:9px;background:#f7f8f7"></i><i style="left:1509px;top:802px;width:8px;height:9px;background:#f5f4f5"></i><i style="left:1517px;top:802px;width:2px;height:9px;background:#f2f3f1"></i><i style="left:1381px;top:811px;width:8px;height:9px;background:#babab8"></i><i style="left:1389px;top:811px;width:8px;height:9px;background:#c7c4c6"></i><i style="left:1397px;top:811px;width:8px;height:9px;background:#c1bfbb"></i><i style="left:1405px;top:811px;width:8px;height:9px;background:#b8b9b5"></i><i style="left:1413px;top:811px;width:8px;height:9px;background:#b7b3b1"></i><i style="left:1421px;top:811px;width:8px;height:9px;background:#b3b0b2"></i><i style="left:1429px;top:811px;width:8px;height:9px;background:#b3b3b3"></i><i style="left:1437px;top:811px;width:8px;height:9px;background:#cdcfcd"></i><i style="left:1445px;top:811px;width:8px;height:9px;background:#adadac"></i><i style="left:1453px;top:811px;width:8px;height:9px;background:#afadae"></i><i style="left:1461px;top:811px;width:8px;height:9px;background:#c1c0c1"></i><i style="left:1469px;top:811px;width:8px;height:9px;background:#adafaf"></i><i style="left:1477px;top:811px;width:8px;height:9px;background:#c3c2c1"></i><i style="left:1485px;top:811px;width:8px;height:9px;background:#bebbb9"></i><i style="left:1493px;top:811px;width:8px;height:9px;background:#c3c1bf"></i><i style="left:1501px;top:811px;width:8px;height:9px;background:#b1b0b1"></i><i style="left:1509px;top:811px;width:8px;height:9px;background:#c1c0be"></i><i style="left:1517px;top:811px;width:2px;height:9px;background:#b5b4b6"></i><i style="left:1381px;top:820px;width:8px;height:8px;background:#f4f3f3"></i><i style="left:1389px;top:820px;width:8px;height:8px;background:#faf8f8"></i><i style="left:1397px;top:820px;width:8px;height:8px;background:#fafbfb"></i><i style="left:1405px;top:820px;width:8px;height:8px;background:#f7f8f8"></i><i style="left:1413px;top:820px;width:8px;height:8px;background:#f8f5f8"></i><i style="left:1421px;top:820px;width:8px;height:8px;background:#f9f7f6"></i><i style="left:1429px;top:820px;width:8px;height:8px;background:#fbfafb"></i><i style="left:1437px;top:820px;width:8px;height:8px;background:#fbf9f9"></i><i style="left:1445px;top:820px;width:8px;height:8px;background:#f5f2ef"></i><i style="left:1453px;top:820px;width:8px;height:8px;background:#f7f8f5"></i><i style="left:1461px;top:820px;width:8px;height:8px;background:#f7f7f9"></i><i style="left:1469px;top:820px;width:8px;height:8px;background:#f3f3f5"></i><i style="left:1477px;top:820px;width:8px;height:8px;background:#fafbf8"></i><i style="left:1485px;top:820px;width:8px;height:8px;background:#f9f6f8"></i><i style="left:1493px;top:820px;width:8px;height:8px;background:#f4f5f2"></i><i style="left:1501px;top:820px;width:8px;height:8px;background:#f9fafc"></i><i style="left:1509px;top:820px;width:8px;height:8px;background:#f7f5f3"></i><i style="left:1517px;top:820px;width:2px;height:8px;background:#f9f7f5"></i><i style="left:1603px;top:794px;width:8px;height:9px;background:#f4f4f7"></i><i style="left:1611px;top:794px;width:8px;height:9px;background:#eff1f0"></i><i style="left:1619px;top:794px;width:8px;height:9px;background:#f4f4f6"></i><i style="left:1627px;top:794px;width:8px;height:9px;background:#f8f6f8"></i><i style="left:1635px;top:794px;width:8px;height:9px;background:#f2f3f0"></i><i style="left:1643px;top:794px;width:8px;height:9px;background:#f6f3f2"></i><i style="left:1651px;top:794px;width:8px;height:9px;background:#f5f5f5"></i><i style="left:1659px;top:794px;width:8px;height:9px;background:#f5f4f2"></i><i style="left:1667px;top:794px;width:8px;height:9px;background:#f4f2f0"></i><i style="left:1675px;top:794px;width:8px;height:9px;background:#f5f3f3"></i><i style="left:1683px;top:794px;width:8px;height:9px;background:#f2efee"></i><i style="left:1691px;top:794px;width:8px;height:9px;background:#f8f6f5"></i><i style="left:1699px;top:794px;width:8px;height:9px;background:#f6f2f1"></i><i style="left:1707px;top:794px;width:6px;height:9px;background:#f4f5f3"></i><i style="left:1603px;top:803px;width:8px;height:8px;background:#bfbfc1"></i><i style="left:1611px;top:803px;width:8px;height:8px;background:#a4a4a2"></i><i style="left:1619px;top:803px;width:8px;height:8px;background:#adabad"></i><i style="left:1627px;top:803px;width:8px;height:8px;background:#b9b9ba"></i><i style="left:1635px;top:803px;width:8px;height:8px;background:#bcbdbc"></i><i style="left:1643px;top:803px;width:8px;height:8px;background:#bebcbe"></i><i style="left:1651px;top:803px;width:8px;height:8px;background:#b3b4b5"></i><i style="left:1659px;top:803px;width:8px;height:8px;background:#a3a3a5"></i><i style="left:1667px;top:803px;width:8px;height:8px;background:#b5b2b4"></i><i style="left:1675px;top:803px;width:8px;height:8px;background:#a9a9a9"></i><i style="left:1683px;top:803px;width:8px;height:8px;background:#a7a7a8"></i><i style="left:1691px;top:803px;width:8px;height:8px;background:#afaca9"></i><i style="left:1699px;top:803px;width:8px;height:8px;background:#afb0b0"></i><i style="left:1707px;top:803px;width:6px;height:8px;background:#b0aeaa"></i><i style="left:1612px;top:811px;width:8px;height:8px;background:#fbfaf7"></i><i style="left:1620px;top:811px;width:8px;height:8px;background:#f7f6f9"></i><i style="left:1628px;top:811px;width:8px;height:8px;background:#f4f4f1"></i><i style="left:1636px;top:811px;width:8px;height:8px;background:#f3f2ef"></i><i style="left:1644px;top:811px;width:8px;height:8px;background:#f2f3ef"></i><i style="left:1652px;top:811px;width:8px;height:8px;background:#fbf8f7"></i><i style="left:1660px;top:811px;width:8px;height:8px;background:#f3f3ef"></i><i style="left:1668px;top:811px;width:8px;height:8px;background:#fcf9fa"></i><i style="left:1676px;top:811px;width:8px;height:8px;background:#f9f8f9"></i><i style="left:1684px;top:811px;width:8px;height:8px;background:#f8f6f5"></i><i style="left:1692px;top:811px;width:8px;height:8px;background:#fcfaf8"></i><i style="left:1700px;top:811px;width:5px;height:8px;background:#faf8f6"></i><i style="left:1612px;top:819px;width:8px;height:8px;background:#b2b3b3"></i><i style="left:1620px;top:819px;width:8px;height:8px;background:#c5c3c2"></i><i style="left:1628px;top:819px;width:8px;height:8px;background:#c1c2be"></i><i style="left:1636px;top:819px;width:8px;height:8px;background:#bab6b9"></i><i style="left:1644px;top:819px;width:8px;height:8px;background:#b7b6b6"></i><i style="left:1652px;top:819px;width:8px;height:8px;background:#c8c7c8"></i><i style="left:1660px;top:819px;width:8px;height:8px;background:#c8c7c3"></i><i style="left:1668px;top:819px;width:8px;height:8px;background:#d2d1cf"></i><i style="left:1676px;top:819px;width:8px;height:8px;background:#d6d3d6"></i><i style="left:1684px;top:819px;width:8px;height:8px;background:#cbcbc7"></i><i style="left:1692px;top:819px;width:8px;height:8px;background:#cecbcc"></i><i style="left:1700px;top:819px;width:5px;height:8px;background:#c5c7c7"></i><i style="left:1612px;top:827px;width:8px;height:8px;background:#f8f5f4"></i><i style="left:1620px;top:827px;width:8px;height:8px;background:#fafafa"></i><i style="left:1628px;top:827px;width:8px;height:8px;background:#fcf8f7"></i><i style="left:1636px;top:827px;width:8px;height:8px;background:#f6f3f4"></i><i style="left:1644px;top:827px;width:8px;height:8px;background:#f8f4f4"></i><i style="left:1652px;top:827px;width:8px;height:8px;background:#f5f4f7"></i><i style="left:1660px;top:827px;width:8px;height:8px;background:#f9fafb"></i><i style="left:1668px;top:827px;width:8px;height:8px;background:#f3f2f1"></i><i style="left:1676px;top:827px;width:8px;height:8px;background:#f7f8f6"></i><i style="left:1684px;top:827px;width:8px;height:8px;background:#f8f5f5"></i><i style="left:1692px;top:827px;width:8px;height:8px;background:#faf8f6"></i><i style="left:1700px;top:827px;width:5px;height:8px;background:#f8f9f9"></i><i style="left:365px;top:1027px;width:8px;height:8px;background:#e0dfdb"></i><i style="left:373px;top:1027px;width:8px;height:8px;background:#e5e4e1"></i><i style="left:381px;top:1027px;width:8px;height:8px;background:#f0ecea"></i><i style="left:389px;top:1027px;width:8px;height:8px;background:#eaeaea"></i><i style="left:397px;top:1027px;width:8px;height:8px;background:#e5e6e4"></i><i style="left:405px;top:1027px;width:8px;height:8px;background:#e6e5e4"></i><i style="left:413px;top:1027px;width:8px;height:8px;background:#d8d4d2"></i><i style="left:421px;top:1027px;width:8px;height:8px;background:#e8e6e8"></i><i style="left:429px;top:1027px;width:8px;height:8px;background:#dbdbdb"></i><i style="left:365px;top:1035px;width:8px;height:8px;background:#cac9c7"></i><i style="left:373px;top:1035px;width:8px;height:8px;background:#cac7c9"></i><i style="left:381px;top:1035px;width:8px;height:8px;background:#d6d6d5"></i><i style="left:389px;top:1035px;width:8px;height:8px;background:#d4d4d2"></i><i style="left:397px;top:1035px;width:8px;height:8px;background:#bcbab9"></i><i style="left:405px;top:1035px;width:8px;height:8px;background:#bbbaba"></i><i style="left:413px;top:1035px;width:8px;height:8px;background:#c9c7c8"></i><i style="left:421px;top:1035px;width:8px;height:8px;background:#c3bfc2"></i><i style="left:429px;top:1035px;width:8px;height:8px;background:#ced0cd"></i><i style="left:341px;top:1043px;width:8px;height:8px;background:#eeeeef"></i><i style="left:349px;top:1043px;width:8px;height:8px;background:#f2f1f0"></i><i style="left:357px;top:1043px;width:8px;height:8px;background:#f0f0f2"></i><i style="left:365px;top:1043px;width:8px;height:8px;background:#f5f3f5"></i><i style="left:373px;top:1043px;width:8px;height:8px;background:#f2f0ee"></i><i style="left:381px;top:1043px;width:8px;height:8px;background:#edebeb"></i><i style="left:389px;top:1043px;width:8px;height:8px;background:#efebee"></i><i style="left:397px;top:1043px;width:8px;height:8px;background:#ededee"></i><i style="left:405px;top:1043px;width:8px;height:8px;background:#ebebe9"></i><i style="left:413px;top:1043px;width:8px;height:8px;background:#f8f6f3"></i><i style="left:421px;top:1043px;width:8px;height:8px;background:#ebeaec"></i><i style="left:429px;top:1043px;width:8px;height:8px;background:#e9eae7"></i><i style="left:437px;top:1043px;width:8px;height:8px;background:#f6f7f6"></i><i style="left:445px;top:1043px;width:8px;height:8px;background:#eaebe9"></i><i style="left:341px;top:1051px;width:8px;height:8px;background:#c5c7c8"></i><i style="left:349px;top:1051px;width:8px;height:8px;background:#c5c1c2"></i><i style="left:357px;top:1051px;width:8px;height:8px;background:#ababaa"></i><i style="left:365px;top:1051px;width:8px;height:8px;background:#b7b3b2"></i><i style="left:373px;top:1051px;width:8px;height:8px;background:#cbcbc9"></i><i style="left:381px;top:1051px;width:8px;height:8px;background:#aeadac"></i><i style="left:389px;top:1051px;width:8px;height:8px;background:#bebbbc"></i><i style="left:397px;top:1051px;width:8px;height:8px;background:#c1c2c1"></i><i style="left:405px;top:1051px;width:8px;height:8px;background:#b9b7b8"></i><i style="left:413px;top:1051px;width:8px;height:8px;background:#b9b7b6"></i><i style="left:421px;top:1051px;width:8px;height:8px;background:#abacad"></i><i style="left:429px;top:1051px;width:8px;height:8px;background:#c1c0bf"></i><i style="left:437px;top:1051px;width:8px;height:8px;background:#b2b1af"></i><i style="left:445px;top:1051px;width:8px;height:8px;background:#c8c6c2"></i><i style="left:453px;top:1051px;width:8px;height:8px;background:#bbbdb9"></i><i style="left:461px;top:1051px;width:8px;height:8px;background:#c5c2bf"></i><i style="left:533px;top:1033px;width:8px;height:9px;background:#e3e3e2"></i><i style="left:541px;top:1033px;width:8px;height:9px;background:#e1e2e2"></i><i style="left:549px;top:1033px;width:8px;height:9px;background:#ebeae9"></i><i style="left:557px;top:1033px;width:8px;height:9px;background:#e1e0df"></i><i style="left:565px;top:1033px;width:8px;height:9px;background:#e7e7e6"></i><i style="left:573px;top:1033px;width:8px;height:9px;background:#e0dddb"></i><i style="left:581px;top:1033px;width:8px;height:9px;background:#dedcd9"></i><i style="left:589px;top:1033px;width:8px;height:9px;background:#eaebec"></i><i style="left:597px;top:1033px;width:8px;height:9px;background:#f1eff1"></i><i style="left:605px;top:1033px;width:8px;height:9px;background:#e0e1de"></i><i style="left:613px;top:1033px;width:8px;height:9px;background:#eaebe8"></i><i style="left:621px;top:1033px;width:8px;height:9px;background:#e0e0e1"></i><i style="left:629px;top:1033px;width:8px;height:9px;background:#e3e3e2"></i><i style="left:637px;top:1033px;width:8px;height:9px;background:#f2efed"></i><i style="left:645px;top:1033px;width:8px;height:9px;background:#f1f0ef"></i><i style="left:653px;top:1033px;width:8px;height:9px;background:#eae8ea"></i><i style="left:661px;top:1033px;width:8px;height:9px;background:#e8e6e3"></i><i style="left:669px;top:1033px;width:8px;height:9px;background:#e5e4e5"></i><i style="left:677px;top:1033px;width:7px;height:9px;background:#e1e2df"></i><i style="left:533px;top:1042px;width:8px;height:14px;background:#dedfdf"></i><i style="left:541px;top:1042px;width:8px;height:14px;background:#d8d6d9"></i><i style="left:549px;top:1042px;width:8px;height:14px;background:#e3e3e4"></i><i style="left:557px;top:1042px;width:8px;height:14px;background:#d7d7d6"></i><i style="left:565px;top:1042px;width:8px;height:14px;background:#eae7e5"></i><i style="left:573px;top:1042px;width:8px;height:14px;background:#eeecef"></i><i style="left:581px;top:1042px;width:8px;height:14px;background:#dcdad6"></i><i style="left:589px;top:1042px;width:8px;height:14px;background:#dedcd9"></i><i style="left:597px;top:1042px;width:8px;height:14px;background:#edeae9"></i><i style="left:605px;top:1042px;width:8px;height:14px;background:#e3e2e3"></i><i style="left:613px;top:1042px;width:8px;height:14px;background:#e8e4e3"></i><i style="left:621px;top:1042px;width:8px;height:14px;background:#d9d7d5"></i><i style="left:629px;top:1042px;width:8px;height:14px;background:#e6e4e6"></i><i style="left:637px;top:1042px;width:8px;height:14px;background:#e5e5e5"></i><i style="left:645px;top:1042px;width:8px;height:14px;background:#d9dad8"></i><i style="left:653px;top:1042px;width:8px;height:14px;background:#d4d4d3"></i><i style="left:661px;top:1042px;width:8px;height:14px;background:#e3e0e0"></i><i style="left:669px;top:1042px;width:8px;height:14px;background:#ebe9e7"></i><i style="left:677px;top:1042px;width:7px;height:14px;background:#edebee"></i><i style="left:734px;top:1028px;width:8px;height:10px;background:#e3e5e5"></i><i style="left:742px;top:1028px;width:8px;height:10px;background:#cecfce"></i><i style="left:750px;top:1028px;width:8px;height:10px;background:#e3e3e1"></i><i style="left:758px;top:1028px;width:8px;height:10px;background:#eae6e7"></i><i style="left:766px;top:1028px;width:8px;height:10px;background:#d1d0ce"></i><i style="left:774px;top:1028px;width:8px;height:10px;background:#cccccd"></i><i style="left:782px;top:1028px;width:8px;height:10px;background:#d2d0d3"></i><i style="left:790px;top:1028px;width:8px;height:10px;background:#cdcbce"></i><i style="left:798px;top:1028px;width:8px;height:10px;background:#e6e4e4"></i><i style="left:806px;top:1028px;width:8px;height:10px;background:#ccccca"></i><i style="left:814px;top:1028px;width:8px;height:10px;background:#d2d0d1"></i><i style="left:822px;top:1028px;width:8px;height:10px;background:#e8e9e9"></i><i style="left:830px;top:1028px;width:8px;height:10px;background:#d6d7d7"></i><i style="left:838px;top:1028px;width:8px;height:10px;background:#ccc9c8"></i><i style="left:846px;top:1028px;width:8px;height:10px;background:#d4d3d4"></i><i style="left:854px;top:1028px;width:8px;height:10px;background:#d4d3d6"></i><i style="left:862px;top:1028px;width:8px;height:10px;background:#ece8e6"></i><i style="left:870px;top:1028px;width:8px;height:10px;background:#c6c6c7"></i><i style="left:878px;top:1028px;width:6px;height:10px;background:#d4d3d2"></i><i style="left:734px;top:1038px;width:8px;height:10px;background:#e6e4e5"></i><i style="left:742px;top:1038px;width:8px;height:10px;background:#f0eeea"></i><i style="left:750px;top:1038px;width:8px;height:10px;background:#ede9e7"></i><i style="left:758px;top:1038px;width:8px;height:10px;background:#f3f2f1"></i><i style="left:766px;top:1038px;width:8px;height:10px;background:#f0f0ee"></i><i style="left:774px;top:1038px;width:8px;height:10px;background:#eaeae9"></i><i style="left:782px;top:1038px;width:8px;height:10px;background:#e7e6e3"></i><i style="left:790px;top:1038px;width:8px;height:10px;background:#f2eeec"></i><i style="left:798px;top:1038px;width:8px;height:10px;background:#edebe8"></i><i style="left:806px;top:1038px;width:8px;height:10px;background:#e3e2e5"></i><i style="left:814px;top:1038px;width:8px;height:10px;background:#f1f0f0"></i><i style="left:822px;top:1038px;width:8px;height:10px;background:#e5e4e3"></i><i style="left:830px;top:1038px;width:8px;height:10px;background:#eaeaeb"></i><i style="left:838px;top:1038px;width:8px;height:10px;background:#e4e3e1"></i><i style="left:846px;top:1038px;width:8px;height:10px;background:#e6e4e0"></i><i style="left:854px;top:1038px;width:8px;height:10px;background:#e6e7e7"></i><i style="left:862px;top:1038px;width:8px;height:10px;background:#e4e4e1"></i><i style="left:870px;top:1038px;width:8px;height:10px;background:#f2efef"></i><i style="left:878px;top:1038px;width:6px;height:10px;background:#e9ebea"></i><i style="left:751px;top:1048px;width:8px;height:9px;background:#bcbabc"></i><i style="left:759px;top:1048px;width:8px;height:9px;background:#d1d1d1"></i><i style="left:767px;top:1048px;width:8px;height:9px;background:#d1d1d1"></i><i style="left:775px;top:1048px;width:8px;height:9px;background:#bebdbf"></i><i style="left:783px;top:1048px;width:8px;height:9px;background:#d0cccd"></i><i style="left:791px;top:1048px;width:8px;height:9px;background:#d3d4d6"></i><i style="left:799px;top:1048px;width:8px;height:9px;background:#cac9c9"></i><i style="left:807px;top:1048px;width:8px;height:9px;background:#b5b6b7"></i><i style="left:815px;top:1048px;width:8px;height:9px;background:#c8c5c4"></i><i style="left:823px;top:1048px;width:8px;height:9px;background:#b1b0b1"></i><i style="left:831px;top:1048px;width:8px;height:9px;background:#b0b1b1"></i><i style="left:839px;top:1048px;width:8px;height:9px;background:#cdcaca"></i><i style="left:847px;top:1048px;width:3px;height:9px;background:#babab7"></i><i style="left:751px;top:1057px;width:8px;height:9px;background:#f4f3f3"></i><i style="left:759px;top:1057px;width:8px;height:9px;background:#f3f2ef"></i><i style="left:767px;top:1057px;width:8px;height:9px;background:#f6f7f6"></i><i style="left:775px;top:1057px;width:8px;height:9px;background:#fbf7f5"></i><i style="left:783px;top:1057px;width:8px;height:9px;background:#f4f5f3"></i><i style="left:791px;top:1057px;width:8px;height:9px;background:#f9f8f6"></i><i style="left:799px;top:1057px;width:8px;height:9px;background:#f7f6f6"></i><i style="left:807px;top:1057px;width:8px;height:9px;background:#f9f8f7"></i><i style="left:815px;top:1057px;width:8px;height:9px;background:#fdf9f8"></i><i style="left:823px;top:1057px;width:8px;height:9px;background:#fbf7f5"></i><i style="left:831px;top:1057px;width:8px;height:9px;background:#f3f3f4"></i><i style="left:839px;top:1057px;width:8px;height:9px;background:#f7f7f3"></i><i style="left:847px;top:1057px;width:8px;height:9px;background:#fdfbfa"></i><i style="left:855px;top:1057px;width:8px;height:9px;background:#f5f5f4"></i><i style="left:863px;top:1057px;width:8px;height:9px;background:#f6f4f2"></i><i style="left:871px;top:1057px;width:8px;height:9px;background:#faf9f8"></i><i style="left:879px;top:1057px;width:5px;height:9px;background:#f8f7f8"></i><i style="left:1503px;top:811px;width:8px;height:9px;background:#6f7880"></i><i style="left:1503px;top:802px;width:8px;height:9px;background:#cfd2d6"></i><i style="left:1503px;top:820px;width:8px;height:8px;background:#a8adb2"></i><i style="left:884px;top:1038px;width:8px;height:10px;background:#adadad"></i><i style="left:892px;top:1038px;width:8px;height:10px;background:#808a90"></i><i style="left:884px;top:1048px;width:8px;height:9px;background:#c8c8c8"></i><i style="left:892px;top:1048px;width:8px;height:9px;background:#a4a8b0"></i><svg class="fstar" style="left:1514px;top:636px;filter:drop-shadow(0 1px 1px rgba(0,0,0,.25))" width="26" height="26" viewBox="-1 -1 26 26"><path d="M12 .6l3.3 7.3 7.9.8-6 5.3 1.8 7.9L12 17.8l-7 4.1 1.8-7.9-6-5.3 7.9-.8z" fill="#f9cb14" stroke="#f9cb14" stroke-width="0.8" stroke-linejoin="round"/></svg><svg class="fstar" style="left:884px;top:866px;filter:drop-shadow(0 1px 1px rgba(0,0,0,.25))" width="26" height="26" viewBox="-1 -1 26 26"><path d="M12 .6l3.3 7.3 7.9.8-6 5.3 1.8 7.9L12 17.8l-7 4.1 1.8-7.9-6-5.3 7.9-.8z" fill="#f9cb14" stroke="#f9cb14" stroke-width="0.8" stroke-linejoin="round"/></svg>
</body></html>
